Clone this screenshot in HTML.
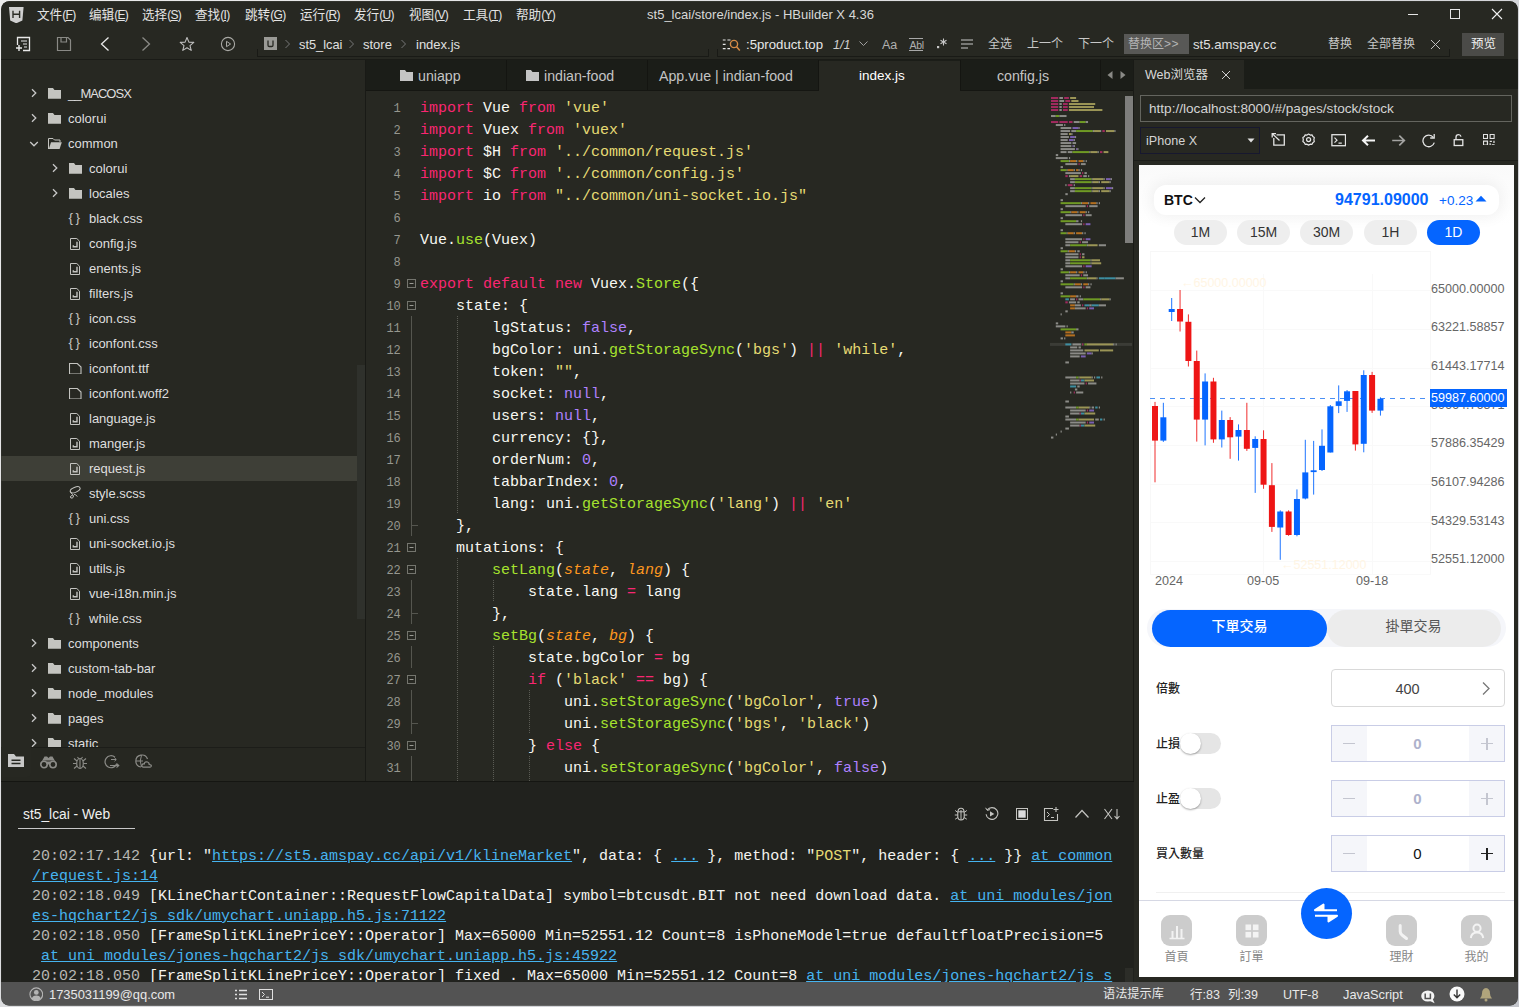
<!DOCTYPE html>
<html><head><meta charset="utf-8"><title>HBuilder X</title><style>
html,body{margin:0;padding:0}
body{width:1519px;height:1007px;overflow:hidden;background:linear-gradient(135deg,#ececec,#c4c6cc);position:relative;font-family:'Liberation Sans',sans-serif}
#w{position:absolute;left:0;top:0;width:1519px;height:1007px;background:#272822;clip-path:inset(1.2px 1.2px 1.5px 1.2px round 8px)}
.b{position:absolute;display:block}
.t{position:absolute;white-space:nowrap}
</style></head><body><div id="w">
<div class="b" style="left:0px;top:0px;width:1519px;height:29px;background:#272822;"></div>
<svg class="b" style="left:9.3px;top:7px;" width="14.6" height="16.4" viewBox="0 0 14.6 16.4"><path d="M0 0H14.6L13.4 13.6L7.3 16.3L1.2 13.6Z" fill="#d0d0d0"/><path d="M4 3.8V11M10.6 3.8V11M4 7.3H10.6" stroke="#2c2d27" stroke-width="1.4" fill="none"/></svg>
<div class="t" style="top:4.5px;font-size:12.6px;line-height:20px;color:#e4e4e4;font-family:'Liberation Sans','Noto Sans CJK SC',sans-serif;left:37px;">文件<span style="font-size:12px;letter-spacing:-0.7px">(<span style="text-decoration:underline">F</span>)</span></div>
<div class="t" style="top:4.5px;font-size:12.6px;line-height:20px;color:#e4e4e4;font-family:'Liberation Sans','Noto Sans CJK SC',sans-serif;left:89px;">编辑<span style="font-size:12px;letter-spacing:-0.7px">(<span style="text-decoration:underline">E</span>)</span></div>
<div class="t" style="top:4.5px;font-size:12.6px;line-height:20px;color:#e4e4e4;font-family:'Liberation Sans','Noto Sans CJK SC',sans-serif;left:142px;">选择<span style="font-size:12px;letter-spacing:-0.7px">(<span style="text-decoration:underline">S</span>)</span></div>
<div class="t" style="top:4.5px;font-size:12.6px;line-height:20px;color:#e4e4e4;font-family:'Liberation Sans','Noto Sans CJK SC',sans-serif;left:195px;">查找<span style="font-size:12px;letter-spacing:-0.7px">(<span style="text-decoration:underline">I</span>)</span></div>
<div class="t" style="top:4.5px;font-size:12.6px;line-height:20px;color:#e4e4e4;font-family:'Liberation Sans','Noto Sans CJK SC',sans-serif;left:245px;">跳转<span style="font-size:12px;letter-spacing:-0.7px">(<span style="text-decoration:underline">G</span>)</span></div>
<div class="t" style="top:4.5px;font-size:12.6px;line-height:20px;color:#e4e4e4;font-family:'Liberation Sans','Noto Sans CJK SC',sans-serif;left:300px;">运行<span style="font-size:12px;letter-spacing:-0.7px">(<span style="text-decoration:underline">R</span>)</span></div>
<div class="t" style="top:4.5px;font-size:12.6px;line-height:20px;color:#e4e4e4;font-family:'Liberation Sans','Noto Sans CJK SC',sans-serif;left:354px;">发行<span style="font-size:12px;letter-spacing:-0.7px">(<span style="text-decoration:underline">U</span>)</span></div>
<div class="t" style="top:4.5px;font-size:12.6px;line-height:20px;color:#e4e4e4;font-family:'Liberation Sans','Noto Sans CJK SC',sans-serif;left:409px;">视图<span style="font-size:12px;letter-spacing:-0.7px">(<span style="text-decoration:underline">V</span>)</span></div>
<div class="t" style="top:4.5px;font-size:12.6px;line-height:20px;color:#e4e4e4;font-family:'Liberation Sans','Noto Sans CJK SC',sans-serif;left:463px;">工具<span style="font-size:12px;letter-spacing:-0.7px">(<span style="text-decoration:underline">T</span>)</span></div>
<div class="t" style="top:4.5px;font-size:12.6px;line-height:20px;color:#e4e4e4;font-family:'Liberation Sans','Noto Sans CJK SC',sans-serif;left:516px;">帮助<span style="font-size:12px;letter-spacing:-0.7px">(<span style="text-decoration:underline">Y</span>)</span></div>
<div class="t" style="top:5.0px;font-size:13px;line-height:20px;color:#d8d8d8;font-family:'Liberation Sans',sans-serif;left:560.5px;width:400px;text-align:center;">st5_lcai/store/index.js - HBuilder X 4.36</div>
<svg class="b" style="left:1406px;top:8px;" width="14" height="12" viewBox="0 0 14 12"><path d="M2 6.5H12" stroke="#e6e6e6" stroke-width="1"/></svg>
<svg class="b" style="left:1449px;top:8px;" width="12" height="12" viewBox="0 0 12 12"><rect x="1.5" y="1.5" width="9" height="9" fill="none" stroke="#e6e6e6" stroke-width="1"/></svg>
<svg class="b" style="left:1491px;top:8px;" width="12" height="12" viewBox="0 0 12 12"><path d="M1 1L11 11M11 1L1 11" stroke="#f0f0f0" stroke-width="1.1"/></svg>
<div class="b" style="left:0px;top:29px;width:1519px;height:31px;background:#272822;"></div>
<div class="b" style="left:0px;top:59px;width:1519px;height:1px;background:#1a1b17;"></div>
<svg class="b" style="left:15px;top:36px;" width="16" height="16" viewBox="0 0 16 16"><path d="M2.5 9V1.5H14.5V14.5H8" fill="none" stroke="#e8e8e8" stroke-width="1.3"/><path d="M6 5H12M8 8H12M9 11H12" stroke="#e8e8e8" stroke-width="1.2"/><path d="M1 12H7M4 9V15" stroke="#e8e8e8" stroke-width="1.4"/></svg>
<svg class="b" style="left:56px;top:36px;" width="16" height="16" viewBox="0 0 16 16"><path d="M1.5 1.5H12L14.5 4V14.5H1.5Z M5 1.5V6H10.5V1.5" fill="none" stroke="#8a8a86" stroke-width="1.2"/></svg>
<svg class="b" style="left:99px;top:36px;" width="12" height="16" viewBox="0 0 12 16"><path d="M9.5 1.5L2.5 8L9.5 14.5" fill="none" stroke="#e8e8e8" stroke-width="1.3"/></svg>
<svg class="b" style="left:140px;top:36px;" width="12" height="16" viewBox="0 0 12 16"><path d="M2.5 1.5L9.5 8L2.5 14.5" fill="none" stroke="#8a8a86" stroke-width="1.3"/></svg>
<svg class="b" style="left:179px;top:36px;" width="16" height="16" viewBox="0 0 16 16"><path d="M8 1.5L9.9 6.1L14.8 6.4L11 9.6L12.2 14.4L8 11.8L3.8 14.4L5 9.6L1.2 6.4L6.1 6.1Z" fill="none" stroke="#bdbdbd" stroke-width="1.1" stroke-linejoin="round"/></svg>
<svg class="b" style="left:220px;top:36px;" width="16" height="16" viewBox="0 0 16 16"><circle cx="8" cy="8" r="6.6" fill="none" stroke="#a8a8a4" stroke-width="1.1"/><path d="M6.5 5.3L10.6 8L6.5 10.7Z" fill="none" stroke="#a8a8a4" stroke-width="1"/></svg>
<div class="b" style="left:257px;top:56px;width:452px;height:1px;background:#191a16;"></div><div class="b" style="left:257px;top:49px;width:1px;height:7px;background:#191a16;"></div><div class="b" style="left:708px;top:49px;width:1px;height:7px;background:#191a16;"></div>
<div class="b" style="left:717px;top:56px;width:733px;height:1px;background:#191a16;"></div><div class="b" style="left:717px;top:49px;width:1px;height:7px;background:#191a16;"></div><div class="b" style="left:1449px;top:49px;width:1px;height:7px;background:#191a16;"></div>
<svg class="b" style="left:264px;top:37px;" width="13" height="13" viewBox="0 0 13 13"><rect x="0" y="0" width="13" height="13" fill="#9a9a96"/><path d="M4 3.5V8.2Q4 9.5 5.3 9.5H7.7Q9 9.5 9 8.2V3.5" fill="none" stroke="#272822" stroke-width="1.3"/></svg>
<svg class="b" style="left:284px;top:39px;" width="7" height="10" viewBox="0 0 7 10"><path d="M1.5 1L5.5 5L1.5 9" fill="none" stroke="#777" stroke-width="1"/></svg>
<div class="t" style="top:34.8px;font-size:12.8px;line-height:20px;color:#e0e0e0;font-family:'Liberation Sans',sans-serif;left:299px;">st5_lcai</div>
<svg class="b" style="left:348px;top:39px;" width="7" height="10" viewBox="0 0 7 10"><path d="M1.5 1L5.5 5L1.5 9" fill="none" stroke="#777" stroke-width="1"/></svg>
<div class="t" style="top:34.8px;font-size:13px;line-height:20px;color:#e0e0e0;font-family:'Liberation Sans',sans-serif;left:363px;">store</div>
<svg class="b" style="left:400px;top:39px;" width="7" height="10" viewBox="0 0 7 10"><path d="M1.5 1L5.5 5L1.5 9" fill="none" stroke="#777" stroke-width="1"/></svg>
<div class="t" style="top:34.8px;font-size:13px;line-height:20px;color:#e0e0e0;font-family:'Liberation Sans',sans-serif;left:416px;">index.js</div>
<svg class="b" style="left:722px;top:37px;" width="19" height="15" viewBox="0 0 19 15"><path d="M0.8 3H3.6M0.8 7.3H3.6M0.8 11.6H3.6M5.4 3H8.5M5.4 11.6H8" stroke="#e8e8e8" stroke-width="1.2"/><circle cx="12" cy="7" r="3.6" fill="none" stroke="#d48a46" stroke-width="1.4"/><path d="M14.6 9.8L17.8 13.6" stroke="#d48a46" stroke-width="1.5"/></svg>
<div class="t" style="top:34.8px;font-size:13.2px;line-height:20px;color:#e6e6e6;font-family:'Liberation Sans',sans-serif;left:746px;">:5product.top</div>
<div class="t" style="top:34.8px;font-size:12.5px;line-height:20px;color:#d0d0d0;font-family:'Liberation Sans',sans-serif;left:833px;font-style:italic;">1/1</div>
<svg class="b" style="left:858px;top:40px;" width="11" height="8" viewBox="0 0 11 8"><path d="M1.5 1.5L5.5 5.5L9.5 1.5" fill="none" stroke="#a0a0a0" stroke-width="1"/></svg>
<div class="t" style="top:34.5px;font-size:12.5px;line-height:20px;color:#b0b0b0;font-family:'Liberation Sans',sans-serif;left:882px;">Aa</div>
<div class="b" style="left:909px;top:38px;width:14px;height:1px;background:#a8a8a8;"></div>
<div class="b" style="left:909px;top:50px;width:14px;height:1px;background:#a8a8a8;"></div>
<div class="t" style="top:34.6px;font-size:10.5px;line-height:20px;color:#b0b0b0;font-family:'Liberation Sans',sans-serif;left:909.5px;letter-spacing:-0.3px;">Abl</div>
<svg class="b" style="left:936px;top:37px;" width="12" height="14" viewBox="0 0 12 14"><rect x="1" y="9" width="2.2" height="2.2" fill="#c8c8c8"/><path d="M7.5 1.5V8.5M4.5 3.2L10.5 6.8M10.5 3.2L4.5 6.8" stroke="#c8c8c8" stroke-width="1.1"/></svg>
<svg class="b" style="left:960px;top:38px;" width="14" height="12" viewBox="0 0 14 12"><path d="M1 2H13M1 6H13M1 10H8" stroke="#c8c8c8" stroke-width="1.2"/></svg>
<div class="t" style="top:33.5px;font-size:12px;line-height:20px;color:#c8c8c8;font-family:'Liberation Sans','Noto Sans CJK SC',sans-serif;left:988px;">全选</div>
<div class="t" style="top:33.5px;font-size:12px;line-height:20px;color:#c8c8c8;font-family:'Liberation Sans','Noto Sans CJK SC',sans-serif;left:1027px;">上一个</div>
<div class="t" style="top:33.5px;font-size:12px;line-height:20px;color:#c8c8c8;font-family:'Liberation Sans','Noto Sans CJK SC',sans-serif;left:1078px;">下一个</div>
<div class="b" style="left:1124px;top:34px;width:65px;height:20px;background:#585856;"></div>
<div class="t" style="top:33.5px;font-size:12px;line-height:20px;color:#b4b4b4;font-family:'Liberation Sans','Noto Sans CJK SC',sans-serif;left:1128px;letter-spacing:0.5px;"><span style="letter-spacing:0">替换区</span>&gt;&gt;</div>
<div class="t" style="top:34.8px;font-size:13.2px;line-height:20px;color:#e0e0e0;font-family:'Liberation Sans',sans-serif;left:1193px;">st5.amspay.cc</div>
<div class="t" style="top:33.5px;font-size:12px;line-height:20px;color:#c8c8c8;font-family:'Liberation Sans','Noto Sans CJK SC',sans-serif;left:1328px;">替换</div>
<div class="t" style="top:33.5px;font-size:12px;line-height:20px;color:#c8c8c8;font-family:'Liberation Sans','Noto Sans CJK SC',sans-serif;left:1367px;">全部替换</div>
<svg class="b" style="left:1430px;top:39px;" width="11" height="11" viewBox="0 0 11 11"><path d="M1 1L10 10M10 1L1 10" stroke="#c0c0c0" stroke-width="1"/></svg>
<div class="b" style="left:1462px;top:33px;width:42px;height:23px;background:#4b4b48;"></div>
<div class="t" style="top:33.5px;font-size:12.5px;line-height:20px;color:#f0f0f0;font-family:'Liberation Sans','Noto Sans CJK SC',sans-serif;left:1471px;">预览</div>
<div class="b" style="left:0px;top:60px;width:365px;height:721px;background:#272822;"></div>
<div class="b" style="left:365px;top:60px;width:1px;height:721px;background:#191a16;"></div>
<div class="b" style="left:357px;top:365px;width:8px;height:254px;background:#2f312c;"></div>
<div class="b" style="left:1px;top:456px;width:356px;height:25px;background:#3e3f37;"></div>
<div class="b" style="left:0;top:60px;width:357px;height:687px;overflow:hidden"><div class="b" style="left:0;top:-60px;width:357px;height:800px"><svg class="b" style="left:31.4px;top:88.1px;" width="7" height="10" viewBox="0 0 7 10"><path d="M1 1.2L4.8 5L1 8.8" fill="none" stroke="#c8c8c8" stroke-width="1.3"/></svg><svg class="b" style="left:48px;top:88.3px;" width="13.2" height="10.8" viewBox="0 0 13.2 10.8"><path d="M0 0H5L6.5 2H13.2V10.8H0Z" fill="#c4c4c0"/></svg><div class="t" style="top:83.8px;font-size:13px;line-height:20px;color:#dedede;font-family:'Liberation Sans',sans-serif;left:68px;letter-spacing:-1px;">__MACOSX</div><svg class="b" style="left:31.4px;top:113.1px;" width="7" height="10" viewBox="0 0 7 10"><path d="M1 1.2L4.8 5L1 8.8" fill="none" stroke="#c8c8c8" stroke-width="1.3"/></svg><svg class="b" style="left:48px;top:113.3px;" width="13.2" height="10.8" viewBox="0 0 13.2 10.8"><path d="M0 0H5L6.5 2H13.2V10.8H0Z" fill="#c4c4c0"/></svg><div class="t" style="top:108.8px;font-size:13px;line-height:20px;color:#dedede;font-family:'Liberation Sans',sans-serif;left:68px;">colorui</div><svg class="b" style="left:29.4px;top:141.1px;" width="10" height="7" viewBox="0 0 10 7"><path d="M1.2 1L5 4.8L8.8 1" fill="none" stroke="#c8c8c8" stroke-width="1.3"/></svg><svg class="b" style="left:47.5px;top:138.0px;" width="14" height="12" viewBox="0 0 14 12"><path d="M0.5 11V0.5H5L6.5 2H12V4" fill="none" stroke="#c4c4c0" stroke-width="1"/><path d="M0.8 11L3 4.3H13.8L11.6 11Z" fill="#c4c4c0"/></svg><div class="t" style="top:133.8px;font-size:13px;line-height:20px;color:#dedede;font-family:'Liberation Sans',sans-serif;left:68px;">common</div><svg class="b" style="left:52.4px;top:163.1px;" width="7" height="10" viewBox="0 0 7 10"><path d="M1 1.2L4.8 5L1 8.8" fill="none" stroke="#c8c8c8" stroke-width="1.3"/></svg><svg class="b" style="left:69px;top:163.3px;" width="13.2" height="10.8" viewBox="0 0 13.2 10.8"><path d="M0 0H5L6.5 2H13.2V10.8H0Z" fill="#c4c4c0"/></svg><div class="t" style="top:158.8px;font-size:13px;line-height:20px;color:#dedede;font-family:'Liberation Sans',sans-serif;left:89px;">colorui</div><svg class="b" style="left:52.4px;top:188.1px;" width="7" height="10" viewBox="0 0 7 10"><path d="M1 1.2L4.8 5L1 8.8" fill="none" stroke="#c8c8c8" stroke-width="1.3"/></svg><svg class="b" style="left:69px;top:188.3px;" width="13.2" height="10.8" viewBox="0 0 13.2 10.8"><path d="M0 0H5L6.5 2H13.2V10.8H0Z" fill="#c4c4c0"/></svg><div class="t" style="top:183.8px;font-size:13px;line-height:20px;color:#dedede;font-family:'Liberation Sans',sans-serif;left:89px;">locales</div><div class="t" style="top:210.7px;font-size:13.5px;line-height:14px;color:#c4c4c0;font-family:'Liberation Sans',sans-serif;left:68.5px;letter-spacing:2.6px;">{}</div><div class="t" style="top:208.8px;font-size:13px;line-height:20px;color:#dedede;font-family:'Liberation Sans',sans-serif;left:89px;">black.css</div><svg class="b" style="left:70px;top:237.5px;" width="10" height="12" viewBox="0 0 10 12"><path d="M0.5 0.5H6.8L9.5 3.2V11.5H0.5Z" fill="none" stroke="#c4c4c0" stroke-width="1"/><path d="M7 3.8V8.7H3.3V7.2" fill="none" stroke="#c4c4c0" stroke-width="1.4"/></svg><div class="t" style="top:233.8px;font-size:13px;line-height:20px;color:#dedede;font-family:'Liberation Sans',sans-serif;left:89px;">config.js</div><svg class="b" style="left:70px;top:262.5px;" width="10" height="12" viewBox="0 0 10 12"><path d="M0.5 0.5H6.8L9.5 3.2V11.5H0.5Z" fill="none" stroke="#c4c4c0" stroke-width="1"/><path d="M7 3.8V8.7H3.3V7.2" fill="none" stroke="#c4c4c0" stroke-width="1.4"/></svg><div class="t" style="top:258.8px;font-size:13px;line-height:20px;color:#dedede;font-family:'Liberation Sans',sans-serif;left:89px;">enents.js</div><svg class="b" style="left:70px;top:287.5px;" width="10" height="12" viewBox="0 0 10 12"><path d="M0.5 0.5H6.8L9.5 3.2V11.5H0.5Z" fill="none" stroke="#c4c4c0" stroke-width="1"/><path d="M7 3.8V8.7H3.3V7.2" fill="none" stroke="#c4c4c0" stroke-width="1.4"/></svg><div class="t" style="top:283.8px;font-size:13px;line-height:20px;color:#dedede;font-family:'Liberation Sans',sans-serif;left:89px;">filters.js</div><div class="t" style="top:310.7px;font-size:13.5px;line-height:14px;color:#c4c4c0;font-family:'Liberation Sans',sans-serif;left:68.5px;letter-spacing:2.6px;">{}</div><div class="t" style="top:308.8px;font-size:13px;line-height:20px;color:#dedede;font-family:'Liberation Sans',sans-serif;left:89px;">icon.css</div><div class="t" style="top:335.7px;font-size:13.5px;line-height:14px;color:#c4c4c0;font-family:'Liberation Sans',sans-serif;left:68.5px;letter-spacing:2.6px;">{}</div><div class="t" style="top:333.8px;font-size:13px;line-height:20px;color:#dedede;font-family:'Liberation Sans',sans-serif;left:89px;">iconfont.css</div><svg class="b" style="left:69px;top:362.8px;" width="12.5" height="11.5" viewBox="0 0 12.5 11.5"><path d="M0.5 0.5H8.3L12 4V11H0.5Z" fill="none" stroke="#c4c4c0" stroke-width="1.1"/></svg><div class="t" style="top:358.8px;font-size:13px;line-height:20px;color:#dedede;font-family:'Liberation Sans',sans-serif;left:89px;">iconfont.ttf</div><svg class="b" style="left:69px;top:387.8px;" width="12.5" height="11.5" viewBox="0 0 12.5 11.5"><path d="M0.5 0.5H8.3L12 4V11H0.5Z" fill="none" stroke="#c4c4c0" stroke-width="1.1"/></svg><div class="t" style="top:383.8px;font-size:13px;line-height:20px;color:#dedede;font-family:'Liberation Sans',sans-serif;left:89px;">iconfont.woff2</div><svg class="b" style="left:70px;top:412.5px;" width="10" height="12" viewBox="0 0 10 12"><path d="M0.5 0.5H6.8L9.5 3.2V11.5H0.5Z" fill="none" stroke="#c4c4c0" stroke-width="1"/><path d="M7 3.8V8.7H3.3V7.2" fill="none" stroke="#c4c4c0" stroke-width="1.4"/></svg><div class="t" style="top:408.8px;font-size:13px;line-height:20px;color:#dedede;font-family:'Liberation Sans',sans-serif;left:89px;">language.js</div><svg class="b" style="left:70px;top:437.5px;" width="10" height="12" viewBox="0 0 10 12"><path d="M0.5 0.5H6.8L9.5 3.2V11.5H0.5Z" fill="none" stroke="#c4c4c0" stroke-width="1"/><path d="M7 3.8V8.7H3.3V7.2" fill="none" stroke="#c4c4c0" stroke-width="1.4"/></svg><div class="t" style="top:433.8px;font-size:13px;line-height:20px;color:#dedede;font-family:'Liberation Sans',sans-serif;left:89px;">manger.js</div><svg class="b" style="left:70px;top:462.5px;" width="10" height="12" viewBox="0 0 10 12"><path d="M0.5 0.5H6.8L9.5 3.2V11.5H0.5Z" fill="none" stroke="#c4c4c0" stroke-width="1"/><path d="M7 3.8V8.7H3.3V7.2" fill="none" stroke="#c4c4c0" stroke-width="1.4"/></svg><div class="t" style="top:458.8px;font-size:13px;line-height:20px;color:#dedede;font-family:'Liberation Sans',sans-serif;left:89px;">request.js</div><svg class="b" style="left:69px;top:485.0px;" width="13" height="15" viewBox="0 0 13 15"><ellipse cx="6.2" cy="4.8" rx="5.2" ry="2.5" transform="rotate(-22 6.2 4.8)" fill="none" stroke="#c4c4c0" stroke-width="1"/><path d="M1.3 6.3Q2 8.2 3.6 9.6Q5 11 4.2 12.3Q3.2 13.6 1.8 12.9Q0.8 12 2 10.9Q2.8 10.3 3.6 10.4" fill="none" stroke="#c4c4c0" stroke-width="1"/><path d="M5 9.3Q7 9.3 8.3 11.6" fill="none" stroke="#c4c4c0" stroke-width="0.9"/></svg><div class="t" style="top:483.8px;font-size:13px;line-height:20px;color:#dedede;font-family:'Liberation Sans',sans-serif;left:89px;">style.scss</div><div class="t" style="top:510.7px;font-size:13.5px;line-height:14px;color:#c4c4c0;font-family:'Liberation Sans',sans-serif;left:68.5px;letter-spacing:2.6px;">{}</div><div class="t" style="top:508.8px;font-size:13px;line-height:20px;color:#dedede;font-family:'Liberation Sans',sans-serif;left:89px;">uni.css</div><svg class="b" style="left:70px;top:537.5px;" width="10" height="12" viewBox="0 0 10 12"><path d="M0.5 0.5H6.8L9.5 3.2V11.5H0.5Z" fill="none" stroke="#c4c4c0" stroke-width="1"/><path d="M7 3.8V8.7H3.3V7.2" fill="none" stroke="#c4c4c0" stroke-width="1.4"/></svg><div class="t" style="top:533.8px;font-size:13px;line-height:20px;color:#dedede;font-family:'Liberation Sans',sans-serif;left:89px;">uni-socket.io.js</div><svg class="b" style="left:70px;top:562.5px;" width="10" height="12" viewBox="0 0 10 12"><path d="M0.5 0.5H6.8L9.5 3.2V11.5H0.5Z" fill="none" stroke="#c4c4c0" stroke-width="1"/><path d="M7 3.8V8.7H3.3V7.2" fill="none" stroke="#c4c4c0" stroke-width="1.4"/></svg><div class="t" style="top:558.8px;font-size:13px;line-height:20px;color:#dedede;font-family:'Liberation Sans',sans-serif;left:89px;">utils.js</div><svg class="b" style="left:70px;top:587.5px;" width="10" height="12" viewBox="0 0 10 12"><path d="M0.5 0.5H6.8L9.5 3.2V11.5H0.5Z" fill="none" stroke="#c4c4c0" stroke-width="1"/><path d="M7 3.8V8.7H3.3V7.2" fill="none" stroke="#c4c4c0" stroke-width="1.4"/></svg><div class="t" style="top:583.8px;font-size:13px;line-height:20px;color:#dedede;font-family:'Liberation Sans',sans-serif;left:89px;">vue-i18n.min.js</div><div class="t" style="top:610.7px;font-size:13.5px;line-height:14px;color:#c4c4c0;font-family:'Liberation Sans',sans-serif;left:68.5px;letter-spacing:2.6px;">{}</div><div class="t" style="top:608.8px;font-size:13px;line-height:20px;color:#dedede;font-family:'Liberation Sans',sans-serif;left:89px;">while.css</div><svg class="b" style="left:31.4px;top:638.1px;" width="7" height="10" viewBox="0 0 7 10"><path d="M1 1.2L4.8 5L1 8.8" fill="none" stroke="#c8c8c8" stroke-width="1.3"/></svg><svg class="b" style="left:48px;top:638.3px;" width="13.2" height="10.8" viewBox="0 0 13.2 10.8"><path d="M0 0H5L6.5 2H13.2V10.8H0Z" fill="#c4c4c0"/></svg><div class="t" style="top:633.8px;font-size:13px;line-height:20px;color:#dedede;font-family:'Liberation Sans',sans-serif;left:68px;">components</div><svg class="b" style="left:31.4px;top:663.1px;" width="7" height="10" viewBox="0 0 7 10"><path d="M1 1.2L4.8 5L1 8.8" fill="none" stroke="#c8c8c8" stroke-width="1.3"/></svg><svg class="b" style="left:48px;top:663.3px;" width="13.2" height="10.8" viewBox="0 0 13.2 10.8"><path d="M0 0H5L6.5 2H13.2V10.8H0Z" fill="#c4c4c0"/></svg><div class="t" style="top:658.8px;font-size:13px;line-height:20px;color:#dedede;font-family:'Liberation Sans',sans-serif;left:68px;">custom-tab-bar</div><svg class="b" style="left:31.4px;top:688.1px;" width="7" height="10" viewBox="0 0 7 10"><path d="M1 1.2L4.8 5L1 8.8" fill="none" stroke="#c8c8c8" stroke-width="1.3"/></svg><svg class="b" style="left:48px;top:688.3px;" width="13.2" height="10.8" viewBox="0 0 13.2 10.8"><path d="M0 0H5L6.5 2H13.2V10.8H0Z" fill="#c4c4c0"/></svg><div class="t" style="top:683.8px;font-size:13px;line-height:20px;color:#dedede;font-family:'Liberation Sans',sans-serif;left:68px;">node_modules</div><svg class="b" style="left:31.4px;top:713.1px;" width="7" height="10" viewBox="0 0 7 10"><path d="M1 1.2L4.8 5L1 8.8" fill="none" stroke="#c8c8c8" stroke-width="1.3"/></svg><svg class="b" style="left:48px;top:713.3px;" width="13.2" height="10.8" viewBox="0 0 13.2 10.8"><path d="M0 0H5L6.5 2H13.2V10.8H0Z" fill="#c4c4c0"/></svg><div class="t" style="top:708.8px;font-size:13px;line-height:20px;color:#dedede;font-family:'Liberation Sans',sans-serif;left:68px;">pages</div><svg class="b" style="left:31.4px;top:738.1px;" width="7" height="10" viewBox="0 0 7 10"><path d="M1 1.2L4.8 5L1 8.8" fill="none" stroke="#c8c8c8" stroke-width="1.3"/></svg><svg class="b" style="left:48px;top:738.3px;" width="13.2" height="10.8" viewBox="0 0 13.2 10.8"><path d="M0 0H5L6.5 2H13.2V10.8H0Z" fill="#c4c4c0"/></svg><div class="t" style="top:733.8px;font-size:13px;line-height:20px;color:#dedede;font-family:'Liberation Sans',sans-serif;left:68px;">static</div></div></div>
<div class="b" style="left:0px;top:747px;width:365px;height:35px;background:#262721;"></div>
<div class="b" style="left:0px;top:747px;width:365px;height:1px;background:#1c1d19;"></div>
<div class="b" style="left:1px;top:747px;width:30px;height:30px;background:#272822;border-radius:0 0 4px 0;"></div>
<svg class="b" style="left:8px;top:754px;" width="16" height="13" viewBox="0 0 16 13"><path d="M0 0H6L8 2.6H16V13H0Z" fill="#c8c8c8"/><path d="M3.5 6.3H12.5M3.5 9.5H12.5" stroke="#272822" stroke-width="1.5"/></svg>
<svg class="b" style="left:40px;top:755px;" width="17" height="14" viewBox="0 0 17 14"><circle cx="4" cy="9.5" r="3.2" fill="none" stroke="#8c8c88" stroke-width="1.6"/><circle cx="13" cy="9.5" r="3.2" fill="none" stroke="#8c8c88" stroke-width="1.6"/><path d="M2 6L4.5 1.5H7L8.5 3L10 1.5H12.5L15 6L13 5.5H4Z" fill="#8c8c88"/><rect x="7" y="6.5" width="3" height="3" fill="#8c8c88"/></svg>
<svg class="b" style="left:72px;top:755px;" width="16" height="15" viewBox="0 0 16 15"><ellipse cx="8" cy="8.5" rx="3.3" ry="5" fill="none" stroke="#8c8c88" stroke-width="1.2"/><path d="M8 3.5V13.5M5.5 2L6.8 3.8M10.5 2L9.2 3.8M1 8.5H4.5M11.5 8.5H15M2 3.5L5 6M14 3.5L11 6M2 13.5L5 11M14 13.5L11 11" stroke="#8c8c88" stroke-width="1.1" fill="none"/></svg>
<svg class="b" style="left:103px;top:754px;" width="17" height="16" viewBox="0 0 17 16"><path d="M12 3.2A6 6 0 1 0 13.6 10" fill="none" stroke="#8c8c88" stroke-width="1.2"/><path d="M8 5.5H13M11.5 3.8L13.3 5.5L11.5 7.2" fill="none" stroke="#8c8c88" stroke-width="1"/><path d="M7 11.5H15.5M13.5 9.5L15.8 11.5L13.5 13.5" fill="none" stroke="#8c8c88" stroke-width="1.1"/></svg>
<svg class="b" style="left:135px;top:754px;" width="18" height="16" viewBox="0 0 18 16"><path d="M12.5 5A6 6 0 1 0 6 13" fill="none" stroke="#8c8c88" stroke-width="1.2"/><path d="M1 7H8M6.5 1.2Q4 7 6.5 12.8" fill="none" stroke="#8c8c88" stroke-width="1"/><path d="M8.5 13.2Q6.5 13 7 11Q7.6 9.6 9.2 10Q10 7.2 12.5 8Q14.3 8.8 14.2 10.5Q16.5 10.8 16.3 12.2Q16 13.3 14.8 13.2Z" fill="none" stroke="#8c8c88" stroke-width="1.2"/></svg>
<div class="b" style="left:366px;top:60px;width:768px;height:31px;background:#1b1d18;"></div>
<div class="b" style="left:366px;top:90px;width:768px;height:1px;background:#151612;"></div>
<div class="b" style="left:506px;top:60px;width:1px;height:30px;background:#141511;"></div>
<div class="b" style="left:647px;top:60px;width:1px;height:30px;background:#141511;"></div>
<div class="b" style="left:818px;top:60px;width:1px;height:30px;background:#141511;"></div>
<div class="b" style="left:960px;top:60px;width:1px;height:30px;background:#141511;"></div>
<div class="b" style="left:1100px;top:60px;width:1px;height:30px;background:#141511;"></div>
<div class="b" style="left:819px;top:61px;width:141px;height:30px;background:#272822;"></div>
<svg class="b" style="left:400px;top:69.5px;" width="13.4" height="11" viewBox="0 0 13.4 11"><path d="M0 0H5L6.5 2H13.4V11H0Z" fill="#c4c4c4"/></svg>
<div class="t" style="top:65.5px;font-size:14.2px;line-height:20px;color:#c4c4c4;font-family:'Liberation Sans',sans-serif;left:418px;">uniapp</div>
<svg class="b" style="left:526px;top:69.5px;" width="13.4" height="11" viewBox="0 0 13.4 11"><path d="M0 0H5L6.5 2H13.4V11H0Z" fill="#c4c4c4"/></svg>
<div class="t" style="top:65.5px;font-size:14.2px;line-height:20px;color:#c4c4c4;font-family:'Liberation Sans',sans-serif;left:544px;">indian-food</div>
<div class="t" style="top:65.5px;font-size:14.2px;line-height:20px;color:#c4c4c4;font-family:'Liberation Sans',sans-serif;left:659px;">App.vue | indian-food</div>
<div class="t" style="top:65.5px;font-size:13.5px;line-height:20px;color:#ffffff;font-family:'Liberation Sans',sans-serif;left:859px;">index.js</div>
<div class="t" style="top:65.5px;font-size:14.2px;line-height:20px;color:#c4c4c4;font-family:'Liberation Sans',sans-serif;left:997px;">config.js</div>
<svg class="b" style="left:1106px;top:70px;" width="8" height="10" viewBox="0 0 8 10"><path d="M6.5 1L1.5 5L6.5 9Z" fill="#8a8a86"/></svg>
<svg class="b" style="left:1119px;top:70px;" width="8" height="10" viewBox="0 0 8 10"><path d="M1.5 1L6.5 5L1.5 9Z" fill="#8a8a86"/></svg>
<div class="b" style="left:366px;top:91px;width:768px;height:690px;background:#272822;"></div>
<div class="b" style="left:0;top:91px;width:1134px;height:690px;overflow:hidden"><div class="b" style="left:0;top:-91px;width:1134px;height:800px"><div class="t" style="right:733.8px;top:97.5px;font:12px/22px 'Liberation Mono',monospace;letter-spacing:-0.4px;color:#96978f">1</div><div class="t" style="left:420px;top:98px;font:15px/22px 'Liberation Mono',monospace;color:#f8f8f2;white-space:pre"><span style="color:#f92672">import</span> Vue <span style="color:#f92672">from</span> <span style="color:#e6db74">&#x27;vue&#x27;</span></div><div class="t" style="right:733.8px;top:119.5px;font:12px/22px 'Liberation Mono',monospace;letter-spacing:-0.4px;color:#96978f">2</div><div class="t" style="left:420px;top:120px;font:15px/22px 'Liberation Mono',monospace;color:#f8f8f2;white-space:pre"><span style="color:#f92672">import</span> Vuex <span style="color:#f92672">from</span> <span style="color:#e6db74">&#x27;vuex&#x27;</span></div><div class="t" style="right:733.8px;top:141.5px;font:12px/22px 'Liberation Mono',monospace;letter-spacing:-0.4px;color:#96978f">3</div><div class="t" style="left:420px;top:142px;font:15px/22px 'Liberation Mono',monospace;color:#f8f8f2;white-space:pre"><span style="color:#f92672">import</span> $H <span style="color:#f92672">from</span> <span style="color:#e6db74">&#x27;../common/request.js&#x27;</span></div><div class="t" style="right:733.8px;top:163.5px;font:12px/22px 'Liberation Mono',monospace;letter-spacing:-0.4px;color:#96978f">4</div><div class="t" style="left:420px;top:164px;font:15px/22px 'Liberation Mono',monospace;color:#f8f8f2;white-space:pre"><span style="color:#f92672">import</span> $C <span style="color:#f92672">from</span> <span style="color:#e6db74">&#x27;../common/config.js&#x27;</span></div><div class="t" style="right:733.8px;top:185.5px;font:12px/22px 'Liberation Mono',monospace;letter-spacing:-0.4px;color:#96978f">5</div><div class="t" style="left:420px;top:186px;font:15px/22px 'Liberation Mono',monospace;color:#f8f8f2;white-space:pre"><span style="color:#f92672">import</span> io <span style="color:#f92672">from</span> <span style="color:#e6db74">&quot;../common/uni-socket.io.js&quot;</span></div><div class="t" style="right:733.8px;top:207.5px;font:12px/22px 'Liberation Mono',monospace;letter-spacing:-0.4px;color:#96978f">6</div><div class="t" style="right:733.8px;top:229.5px;font:12px/22px 'Liberation Mono',monospace;letter-spacing:-0.4px;color:#96978f">7</div><div class="t" style="left:420px;top:230px;font:15px/22px 'Liberation Mono',monospace;color:#f8f8f2;white-space:pre">Vue.<span style="color:#a6e22e">use</span>(Vuex)</div><div class="t" style="right:733.8px;top:251.5px;font:12px/22px 'Liberation Mono',monospace;letter-spacing:-0.4px;color:#96978f">8</div><div class="t" style="right:733.8px;top:273.5px;font:12px/22px 'Liberation Mono',monospace;letter-spacing:-0.4px;color:#96978f">9</div><div class="t" style="left:420px;top:274px;font:15px/22px 'Liberation Mono',monospace;color:#f8f8f2;white-space:pre"><span style="color:#f92672">export</span> <span style="color:#f92672">default</span> <span style="color:#f92672">new</span> Vuex.<span style="color:#a6e22e">Store</span>({</div><div class="t" style="right:733.8px;top:295.5px;font:12px/22px 'Liberation Mono',monospace;letter-spacing:-0.4px;color:#96978f">10</div><div class="t" style="left:420px;top:296px;font:15px/22px 'Liberation Mono',monospace;color:#f8f8f2;white-space:pre">    state: {</div><div class="t" style="right:733.8px;top:317.5px;font:12px/22px 'Liberation Mono',monospace;letter-spacing:-0.4px;color:#96978f">11</div><div class="t" style="left:420px;top:318px;font:15px/22px 'Liberation Mono',monospace;color:#f8f8f2;white-space:pre">        lgStatus: <span style="color:#ae81ff">false</span>,</div><div class="t" style="right:733.8px;top:339.5px;font:12px/22px 'Liberation Mono',monospace;letter-spacing:-0.4px;color:#96978f">12</div><div class="t" style="left:420px;top:340px;font:15px/22px 'Liberation Mono',monospace;color:#f8f8f2;white-space:pre">        bgColor: uni.<span style="color:#a6e22e">getStorageSync</span>(<span style="color:#e6db74">&#x27;bgs&#x27;</span>) <span style="color:#f92672">||</span> <span style="color:#e6db74">&#x27;while&#x27;</span>,</div><div class="t" style="right:733.8px;top:361.5px;font:12px/22px 'Liberation Mono',monospace;letter-spacing:-0.4px;color:#96978f">13</div><div class="t" style="left:420px;top:362px;font:15px/22px 'Liberation Mono',monospace;color:#f8f8f2;white-space:pre">        token: <span style="color:#e6db74">&quot;&quot;</span>,</div><div class="t" style="right:733.8px;top:383.5px;font:12px/22px 'Liberation Mono',monospace;letter-spacing:-0.4px;color:#96978f">14</div><div class="t" style="left:420px;top:384px;font:15px/22px 'Liberation Mono',monospace;color:#f8f8f2;white-space:pre">        socket: <span style="color:#ae81ff">null</span>,</div><div class="t" style="right:733.8px;top:405.5px;font:12px/22px 'Liberation Mono',monospace;letter-spacing:-0.4px;color:#96978f">15</div><div class="t" style="left:420px;top:406px;font:15px/22px 'Liberation Mono',monospace;color:#f8f8f2;white-space:pre">        users: <span style="color:#ae81ff">null</span>,</div><div class="t" style="right:733.8px;top:427.5px;font:12px/22px 'Liberation Mono',monospace;letter-spacing:-0.4px;color:#96978f">16</div><div class="t" style="left:420px;top:428px;font:15px/22px 'Liberation Mono',monospace;color:#f8f8f2;white-space:pre">        currency: {},</div><div class="t" style="right:733.8px;top:449.5px;font:12px/22px 'Liberation Mono',monospace;letter-spacing:-0.4px;color:#96978f">17</div><div class="t" style="left:420px;top:450px;font:15px/22px 'Liberation Mono',monospace;color:#f8f8f2;white-space:pre">        orderNum: <span style="color:#ae81ff">0</span>,</div><div class="t" style="right:733.8px;top:471.5px;font:12px/22px 'Liberation Mono',monospace;letter-spacing:-0.4px;color:#96978f">18</div><div class="t" style="left:420px;top:472px;font:15px/22px 'Liberation Mono',monospace;color:#f8f8f2;white-space:pre">        tabbarIndex: <span style="color:#ae81ff">0</span>,</div><div class="t" style="right:733.8px;top:493.5px;font:12px/22px 'Liberation Mono',monospace;letter-spacing:-0.4px;color:#96978f">19</div><div class="t" style="left:420px;top:494px;font:15px/22px 'Liberation Mono',monospace;color:#f8f8f2;white-space:pre">        lang: uni.<span style="color:#a6e22e">getStorageSync</span>(<span style="color:#e6db74">&#x27;lang&#x27;</span>) <span style="color:#f92672">||</span> <span style="color:#e6db74">&#x27;en&#x27;</span></div><div class="t" style="right:733.8px;top:515.5px;font:12px/22px 'Liberation Mono',monospace;letter-spacing:-0.4px;color:#96978f">20</div><div class="t" style="left:420px;top:516px;font:15px/22px 'Liberation Mono',monospace;color:#f8f8f2;white-space:pre">    },</div><div class="t" style="right:733.8px;top:537.5px;font:12px/22px 'Liberation Mono',monospace;letter-spacing:-0.4px;color:#96978f">21</div><div class="t" style="left:420px;top:538px;font:15px/22px 'Liberation Mono',monospace;color:#f8f8f2;white-space:pre">    mutations: {</div><div class="t" style="right:733.8px;top:559.5px;font:12px/22px 'Liberation Mono',monospace;letter-spacing:-0.4px;color:#96978f">22</div><div class="t" style="left:420px;top:560px;font:15px/22px 'Liberation Mono',monospace;color:#f8f8f2;white-space:pre">        <span style="color:#a6e22e">setLang</span>(<span style="color:#fd971f;font-style:italic">state</span>, <span style="color:#fd971f;font-style:italic">lang</span>) {</div><div class="t" style="right:733.8px;top:581.5px;font:12px/22px 'Liberation Mono',monospace;letter-spacing:-0.4px;color:#96978f">23</div><div class="t" style="left:420px;top:582px;font:15px/22px 'Liberation Mono',monospace;color:#f8f8f2;white-space:pre">            state.lang <span style="color:#f92672">=</span> lang</div><div class="t" style="right:733.8px;top:603.5px;font:12px/22px 'Liberation Mono',monospace;letter-spacing:-0.4px;color:#96978f">24</div><div class="t" style="left:420px;top:604px;font:15px/22px 'Liberation Mono',monospace;color:#f8f8f2;white-space:pre">        },</div><div class="t" style="right:733.8px;top:625.5px;font:12px/22px 'Liberation Mono',monospace;letter-spacing:-0.4px;color:#96978f">25</div><div class="t" style="left:420px;top:626px;font:15px/22px 'Liberation Mono',monospace;color:#f8f8f2;white-space:pre">        <span style="color:#a6e22e">setBg</span>(<span style="color:#fd971f;font-style:italic">state</span>, <span style="color:#fd971f;font-style:italic">bg</span>) {</div><div class="t" style="right:733.8px;top:647.5px;font:12px/22px 'Liberation Mono',monospace;letter-spacing:-0.4px;color:#96978f">26</div><div class="t" style="left:420px;top:648px;font:15px/22px 'Liberation Mono',monospace;color:#f8f8f2;white-space:pre">            state.bgColor <span style="color:#f92672">=</span> bg</div><div class="t" style="right:733.8px;top:669.5px;font:12px/22px 'Liberation Mono',monospace;letter-spacing:-0.4px;color:#96978f">27</div><div class="t" style="left:420px;top:670px;font:15px/22px 'Liberation Mono',monospace;color:#f8f8f2;white-space:pre">            <span style="color:#f92672">if</span> (<span style="color:#e6db74">&#x27;black&#x27;</span> <span style="color:#f92672">==</span> bg) {</div><div class="t" style="right:733.8px;top:691.5px;font:12px/22px 'Liberation Mono',monospace;letter-spacing:-0.4px;color:#96978f">28</div><div class="t" style="left:420px;top:692px;font:15px/22px 'Liberation Mono',monospace;color:#f8f8f2;white-space:pre">                uni.<span style="color:#a6e22e">setStorageSync</span>(<span style="color:#e6db74">&#x27;bgColor&#x27;</span>, <span style="color:#ae81ff">true</span>)</div><div class="t" style="right:733.8px;top:713.5px;font:12px/22px 'Liberation Mono',monospace;letter-spacing:-0.4px;color:#96978f">29</div><div class="t" style="left:420px;top:714px;font:15px/22px 'Liberation Mono',monospace;color:#f8f8f2;white-space:pre">                uni.<span style="color:#a6e22e">setStorageSync</span>(<span style="color:#e6db74">&#x27;bgs&#x27;</span>, <span style="color:#e6db74">&#x27;black&#x27;</span>)</div><div class="t" style="right:733.8px;top:735.5px;font:12px/22px 'Liberation Mono',monospace;letter-spacing:-0.4px;color:#96978f">30</div><div class="t" style="left:420px;top:736px;font:15px/22px 'Liberation Mono',monospace;color:#f8f8f2;white-space:pre">            } <span style="color:#f92672">else</span> {</div><div class="t" style="right:733.8px;top:757.5px;font:12px/22px 'Liberation Mono',monospace;letter-spacing:-0.4px;color:#96978f">31</div><div class="t" style="left:420px;top:758px;font:15px/22px 'Liberation Mono',monospace;color:#f8f8f2;white-space:pre">                uni.<span style="color:#a6e22e">setStorageSync</span>(<span style="color:#e6db74">&#x27;bgColor&#x27;</span>, <span style="color:#ae81ff">false</span>)</div><svg class="b" style="left:407px;top:279px;" width="9" height="9" viewBox="0 0 9 9"><rect x="0.5" y="0.5" width="8" height="8" fill="none" stroke="#74756e" stroke-width="1"/><path d="M2.5 4.5H6.5" stroke="#9a9a94" stroke-width="1"/></svg><svg class="b" style="left:407px;top:301px;" width="9" height="9" viewBox="0 0 9 9"><rect x="0.5" y="0.5" width="8" height="8" fill="none" stroke="#74756e" stroke-width="1"/><path d="M2.5 4.5H6.5" stroke="#9a9a94" stroke-width="1"/></svg><svg class="b" style="left:407px;top:543px;" width="9" height="9" viewBox="0 0 9 9"><rect x="0.5" y="0.5" width="8" height="8" fill="none" stroke="#74756e" stroke-width="1"/><path d="M2.5 4.5H6.5" stroke="#9a9a94" stroke-width="1"/></svg><svg class="b" style="left:407px;top:565px;" width="9" height="9" viewBox="0 0 9 9"><rect x="0.5" y="0.5" width="8" height="8" fill="none" stroke="#74756e" stroke-width="1"/><path d="M2.5 4.5H6.5" stroke="#9a9a94" stroke-width="1"/></svg><svg class="b" style="left:407px;top:631px;" width="9" height="9" viewBox="0 0 9 9"><rect x="0.5" y="0.5" width="8" height="8" fill="none" stroke="#74756e" stroke-width="1"/><path d="M2.5 4.5H6.5" stroke="#9a9a94" stroke-width="1"/></svg><svg class="b" style="left:407px;top:675px;" width="9" height="9" viewBox="0 0 9 9"><rect x="0.5" y="0.5" width="8" height="8" fill="none" stroke="#74756e" stroke-width="1"/><path d="M2.5 4.5H6.5" stroke="#9a9a94" stroke-width="1"/></svg><svg class="b" style="left:407px;top:741px;" width="9" height="9" viewBox="0 0 9 9"><rect x="0.5" y="0.5" width="8" height="8" fill="none" stroke="#74756e" stroke-width="1"/><path d="M2.5 4.5H6.5" stroke="#9a9a94" stroke-width="1"/></svg><div class="b" style="left:411px;top:316px;width:1px;height:220px;background:#55564f;"></div><div class="b" style="left:411px;top:525px;width:7px;height:1px;background:#55564f;"></div><div class="b" style="left:411px;top:580px;width:1px;height:44px;background:#55564f;"></div><div class="b" style="left:411px;top:613px;width:7px;height:1px;background:#55564f;"></div><div class="b" style="left:411px;top:646px;width:1px;height:22px;background:#55564f;"></div><div class="b" style="left:411px;top:690px;width:1px;height:44px;background:#55564f;"></div><div class="b" style="left:411px;top:723px;width:7px;height:1px;background:#55564f;"></div><div class="b" style="left:411px;top:756px;width:1px;height:26px;background:#55564f;"></div><div class="b" style="left:457px;top:316px;width:1px;height:198px;background:repeating-linear-gradient(to bottom,#5a5b54 0 1px,transparent 1px 2px)"></div><div class="b" style="left:457px;top:558px;width:1px;height:223px;background:repeating-linear-gradient(to bottom,#5a5b54 0 1px,transparent 1px 2px)"></div><div class="b" style="left:493px;top:580px;width:1px;height:22px;background:repeating-linear-gradient(to bottom,#5a5b54 0 1px,transparent 1px 2px)"></div><div class="b" style="left:493px;top:646px;width:1px;height:135px;background:repeating-linear-gradient(to bottom,#5a5b54 0 1px,transparent 1px 2px)"></div><div class="b" style="left:529px;top:690px;width:1px;height:44px;background:repeating-linear-gradient(to bottom,#5a5b54 0 1px,transparent 1px 2px)"></div><div class="b" style="left:529px;top:756px;width:1px;height:25px;background:repeating-linear-gradient(to bottom,#5a5b54 0 1px,transparent 1px 2px)"></div></div></div>
<svg class="b" style="left:1050px;top:97.0px;" width="82" height="345" viewBox="0 0 82 345"><rect x="0" y="245.91" width="82" height="3" fill="#3b3c36"/><rect x="1.00" y="0.00" width="7.17" height="2" fill="#a12a5e"/><rect x="9.37" y="0.00" width="3.58" height="2" fill="#8b8b87"/><rect x="14.15" y="0.00" width="4.78" height="2" fill="#a12a5e"/><rect x="20.12" y="0.00" width="5.98" height="2" fill="#9b9556"/><rect x="1.00" y="3.00" width="7.17" height="2" fill="#a12a5e"/><rect x="9.37" y="3.00" width="4.78" height="2" fill="#8b8b87"/><rect x="15.34" y="3.00" width="4.78" height="2" fill="#a12a5e"/><rect x="21.32" y="3.00" width="7.17" height="2" fill="#9b9556"/><rect x="1.00" y="6.01" width="7.17" height="2" fill="#a12a5e"/><rect x="9.37" y="6.01" width="2.39" height="2" fill="#8b8b87"/><rect x="12.95" y="6.01" width="4.78" height="2" fill="#a12a5e"/><rect x="18.93" y="6.01" width="26.29" height="2" fill="#9b9556"/><rect x="1.00" y="9.02" width="7.17" height="2" fill="#a12a5e"/><rect x="9.37" y="9.02" width="2.39" height="2" fill="#8b8b87"/><rect x="12.95" y="9.02" width="4.78" height="2" fill="#a12a5e"/><rect x="18.93" y="9.02" width="25.10" height="2" fill="#9b9556"/><rect x="1.00" y="12.02" width="7.17" height="2" fill="#a12a5e"/><rect x="9.37" y="12.02" width="2.39" height="2" fill="#8b8b87"/><rect x="12.95" y="12.02" width="4.78" height="2" fill="#a12a5e"/><rect x="18.93" y="12.02" width="33.46" height="2" fill="#9b9556"/><rect x="1.00" y="18.03" width="4.78" height="2" fill="#8b8b87"/><rect x="5.78" y="18.03" width="3.58" height="2" fill="#6f9a24"/><rect x="9.37" y="18.03" width="7.17" height="2" fill="#8b8b87"/><rect x="1.00" y="24.04" width="7.17" height="2" fill="#a12a5e"/><rect x="9.37" y="24.04" width="8.37" height="2" fill="#a12a5e"/><rect x="18.93" y="24.04" width="3.58" height="2" fill="#a12a5e"/><rect x="23.71" y="24.04" width="5.98" height="2" fill="#8b8b87"/><rect x="29.68" y="24.04" width="5.98" height="2" fill="#6f9a24"/><rect x="35.66" y="24.04" width="2.39" height="2" fill="#8b8b87"/><rect x="5.78" y="27.04" width="7.17" height="2" fill="#8b8b87"/><rect x="14.15" y="27.04" width="1.20" height="2" fill="#8b8b87"/><rect x="10.56" y="30.05" width="10.76" height="2" fill="#8b8b87"/><rect x="22.51" y="30.05" width="5.98" height="2" fill="#7a5fb1"/><rect x="28.49" y="30.05" width="1.20" height="2" fill="#8b8b87"/><rect x="10.56" y="33.05" width="9.56" height="2" fill="#8b8b87"/><rect x="21.32" y="33.05" width="4.78" height="2" fill="#8b8b87"/><rect x="26.10" y="33.05" width="16.73" height="2" fill="#6f9a24"/><rect x="42.83" y="33.05" width="1.20" height="2" fill="#8b8b87"/><rect x="44.02" y="33.05" width="5.98" height="2" fill="#9b9556"/><rect x="50.00" y="33.05" width="1.20" height="2" fill="#8b8b87"/><rect x="52.39" y="33.05" width="2.39" height="2" fill="#a12a5e"/><rect x="55.97" y="33.05" width="8.37" height="2" fill="#9b9556"/><rect x="64.34" y="33.05" width="1.20" height="2" fill="#8b8b87"/><rect x="10.56" y="36.06" width="7.17" height="2" fill="#8b8b87"/><rect x="18.93" y="36.06" width="2.39" height="2" fill="#9b9556"/><rect x="21.32" y="36.06" width="1.20" height="2" fill="#8b8b87"/><rect x="10.56" y="39.06" width="8.37" height="2" fill="#8b8b87"/><rect x="20.12" y="39.06" width="4.78" height="2" fill="#7a5fb1"/><rect x="24.90" y="39.06" width="1.20" height="2" fill="#8b8b87"/><rect x="10.56" y="42.07" width="7.17" height="2" fill="#8b8b87"/><rect x="18.93" y="42.07" width="4.78" height="2" fill="#7a5fb1"/><rect x="23.71" y="42.07" width="1.20" height="2" fill="#8b8b87"/><rect x="10.56" y="45.07" width="10.76" height="2" fill="#8b8b87"/><rect x="22.51" y="45.07" width="3.58" height="2" fill="#8b8b87"/><rect x="10.56" y="48.08" width="10.76" height="2" fill="#8b8b87"/><rect x="22.51" y="48.08" width="1.20" height="2" fill="#7a5fb1"/><rect x="23.71" y="48.08" width="1.20" height="2" fill="#8b8b87"/><rect x="10.56" y="51.09" width="14.34" height="2" fill="#8b8b87"/><rect x="26.10" y="51.09" width="1.20" height="2" fill="#7a5fb1"/><rect x="27.29" y="51.09" width="1.20" height="2" fill="#8b8b87"/><rect x="10.56" y="54.09" width="5.98" height="2" fill="#8b8b87"/><rect x="17.73" y="54.09" width="4.78" height="2" fill="#8b8b87"/><rect x="22.51" y="54.09" width="16.73" height="2" fill="#6f9a24"/><rect x="39.24" y="54.09" width="1.20" height="2" fill="#8b8b87"/><rect x="40.44" y="54.09" width="7.17" height="2" fill="#9b9556"/><rect x="47.61" y="54.09" width="1.20" height="2" fill="#8b8b87"/><rect x="50.00" y="54.09" width="2.39" height="2" fill="#a12a5e"/><rect x="53.58" y="54.09" width="4.78" height="2" fill="#9b9556"/><rect x="5.78" y="57.09" width="2.39" height="2" fill="#8b8b87"/><rect x="5.78" y="60.10" width="11.95" height="2" fill="#8b8b87"/><rect x="18.93" y="60.10" width="1.20" height="2" fill="#8b8b87"/><rect x="10.56" y="63.10" width="8.37" height="2" fill="#6f9a24"/><rect x="18.93" y="63.10" width="1.20" height="2" fill="#8b8b87"/><rect x="20.12" y="63.10" width="5.98" height="2" fill="#b46f1f"/><rect x="26.10" y="63.10" width="1.20" height="2" fill="#8b8b87"/><rect x="28.49" y="63.10" width="4.78" height="2" fill="#b46f1f"/><rect x="33.27" y="63.10" width="1.20" height="2" fill="#8b8b87"/><rect x="35.66" y="63.10" width="1.20" height="2" fill="#8b8b87"/><rect x="15.34" y="66.11" width="11.95" height="2" fill="#8b8b87"/><rect x="28.49" y="66.11" width="1.20" height="2" fill="#a12a5e"/><rect x="30.88" y="66.11" width="4.78" height="2" fill="#8b8b87"/><rect x="10.56" y="69.11" width="2.39" height="2" fill="#8b8b87"/><rect x="10.56" y="72.12" width="5.98" height="2" fill="#6f9a24"/><rect x="16.54" y="72.12" width="1.20" height="2" fill="#8b8b87"/><rect x="17.73" y="72.12" width="5.98" height="2" fill="#b46f1f"/><rect x="23.71" y="72.12" width="1.20" height="2" fill="#8b8b87"/><rect x="26.10" y="72.12" width="2.39" height="2" fill="#b46f1f"/><rect x="28.49" y="72.12" width="1.20" height="2" fill="#8b8b87"/><rect x="30.88" y="72.12" width="1.20" height="2" fill="#8b8b87"/><rect x="15.34" y="75.12" width="15.54" height="2" fill="#8b8b87"/><rect x="32.07" y="75.12" width="1.20" height="2" fill="#a12a5e"/><rect x="34.46" y="75.12" width="2.39" height="2" fill="#8b8b87"/><rect x="15.34" y="78.13" width="2.39" height="2" fill="#a12a5e"/><rect x="18.93" y="78.13" width="1.20" height="2" fill="#8b8b87"/><rect x="20.12" y="78.13" width="8.37" height="2" fill="#9b9556"/><rect x="29.68" y="78.13" width="2.39" height="2" fill="#a12a5e"/><rect x="33.27" y="78.13" width="3.58" height="2" fill="#8b8b87"/><rect x="38.05" y="78.13" width="1.20" height="2" fill="#8b8b87"/><rect x="20.12" y="81.13" width="4.78" height="2" fill="#8b8b87"/><rect x="24.90" y="81.13" width="16.73" height="2" fill="#6f9a24"/><rect x="41.63" y="81.13" width="1.20" height="2" fill="#8b8b87"/><rect x="42.83" y="81.13" width="10.76" height="2" fill="#9b9556"/><rect x="53.58" y="81.13" width="1.20" height="2" fill="#8b8b87"/><rect x="55.97" y="81.13" width="4.78" height="2" fill="#7a5fb1"/><rect x="60.75" y="81.13" width="1.20" height="2" fill="#8b8b87"/><rect x="20.12" y="84.14" width="4.78" height="2" fill="#8b8b87"/><rect x="24.90" y="84.14" width="16.73" height="2" fill="#6f9a24"/><rect x="41.63" y="84.14" width="1.20" height="2" fill="#8b8b87"/><rect x="42.83" y="84.14" width="5.98" height="2" fill="#9b9556"/><rect x="48.80" y="84.14" width="1.20" height="2" fill="#8b8b87"/><rect x="51.19" y="84.14" width="8.37" height="2" fill="#9b9556"/><rect x="59.55" y="84.14" width="1.20" height="2" fill="#8b8b87"/><rect x="15.34" y="87.14" width="1.20" height="2" fill="#8b8b87"/><rect x="17.73" y="87.14" width="4.78" height="2" fill="#a12a5e"/><rect x="23.71" y="87.14" width="1.20" height="2" fill="#8b8b87"/><rect x="20.12" y="90.15" width="4.78" height="2" fill="#8b8b87"/><rect x="24.90" y="90.15" width="16.73" height="2" fill="#6f9a24"/><rect x="41.63" y="90.15" width="1.20" height="2" fill="#8b8b87"/><rect x="42.83" y="90.15" width="10.76" height="2" fill="#9b9556"/><rect x="53.58" y="90.15" width="1.20" height="2" fill="#8b8b87"/><rect x="55.97" y="90.15" width="5.98" height="2" fill="#7a5fb1"/><rect x="61.95" y="90.15" width="1.20" height="2" fill="#8b8b87"/><rect x="20.12" y="93.16" width="4.78" height="2" fill="#8b8b87"/><rect x="24.90" y="93.16" width="16.73" height="2" fill="#6f9a24"/><rect x="41.63" y="93.16" width="1.20" height="2" fill="#8b8b87"/><rect x="42.83" y="93.16" width="5.98" height="2" fill="#9b9556"/><rect x="48.80" y="93.16" width="1.20" height="2" fill="#8b8b87"/><rect x="51.19" y="93.16" width="8.37" height="2" fill="#9b9556"/><rect x="59.55" y="93.16" width="1.20" height="2" fill="#8b8b87"/><rect x="15.34" y="96.16" width="2.39" height="2" fill="#8b8b87"/><rect x="10.56" y="102.17" width="2.39" height="2" fill="#8b8b87"/><rect x="10.56" y="105.17" width="20.32" height="2" fill="#6f9a24"/><rect x="30.88" y="105.17" width="1.20" height="2" fill="#8b8b87"/><rect x="32.07" y="105.17" width="5.98" height="2" fill="#b46f1f"/><rect x="38.05" y="105.17" width="1.20" height="2" fill="#8b8b87"/><rect x="40.44" y="105.17" width="5.98" height="2" fill="#b46f1f"/><rect x="46.41" y="105.17" width="1.20" height="2" fill="#8b8b87"/><rect x="48.80" y="105.17" width="1.20" height="2" fill="#8b8b87"/><rect x="15.34" y="108.18" width="20.32" height="2" fill="#8b8b87"/><rect x="36.85" y="108.18" width="1.20" height="2" fill="#a12a5e"/><rect x="39.24" y="108.18" width="8.37" height="2" fill="#8b8b87"/><rect x="10.56" y="111.19" width="2.39" height="2" fill="#8b8b87"/><rect x="10.56" y="114.19" width="9.56" height="2" fill="#6f9a24"/><rect x="20.12" y="114.19" width="1.20" height="2" fill="#8b8b87"/><rect x="21.32" y="114.19" width="5.98" height="2" fill="#b46f1f"/><rect x="27.29" y="114.19" width="1.20" height="2" fill="#8b8b87"/><rect x="29.68" y="114.19" width="5.98" height="2" fill="#b46f1f"/><rect x="35.66" y="114.19" width="1.20" height="2" fill="#8b8b87"/><rect x="38.05" y="114.19" width="1.20" height="2" fill="#8b8b87"/><rect x="15.34" y="117.19" width="16.73" height="2" fill="#8b8b87"/><rect x="33.27" y="117.19" width="1.20" height="2" fill="#a12a5e"/><rect x="35.66" y="117.19" width="5.98" height="2" fill="#8b8b87"/><rect x="10.56" y="120.20" width="2.39" height="2" fill="#8b8b87"/><rect x="10.56" y="123.20" width="15.54" height="2" fill="#6f9a24"/><rect x="26.10" y="123.20" width="2.39" height="2" fill="#8b8b87"/><rect x="30.88" y="123.20" width="1.20" height="2" fill="#8b8b87"/><rect x="15.34" y="126.21" width="16.73" height="2" fill="#8b8b87"/><rect x="33.27" y="126.21" width="1.20" height="2" fill="#a12a5e"/><rect x="35.66" y="126.21" width="4.78" height="2" fill="#7a5fb1"/><rect x="10.56" y="132.22" width="2.39" height="2" fill="#8b8b87"/><rect x="10.56" y="135.22" width="5.98" height="2" fill="#6f9a24"/><rect x="16.54" y="135.22" width="1.20" height="2" fill="#8b8b87"/><rect x="17.73" y="135.22" width="5.98" height="2" fill="#b46f1f"/><rect x="23.71" y="135.22" width="1.20" height="2" fill="#8b8b87"/><rect x="26.10" y="135.22" width="5.98" height="2" fill="#b46f1f"/><rect x="32.07" y="135.22" width="1.20" height="2" fill="#8b8b87"/><rect x="34.46" y="135.22" width="1.20" height="2" fill="#8b8b87"/><rect x="15.34" y="141.23" width="16.73" height="2" fill="#8b8b87"/><rect x="33.27" y="141.23" width="1.20" height="2" fill="#a12a5e"/><rect x="35.66" y="141.23" width="4.78" height="2" fill="#7a5fb1"/><rect x="15.34" y="144.24" width="13.15" height="2" fill="#8b8b87"/><rect x="29.68" y="144.24" width="1.20" height="2" fill="#a12a5e"/><rect x="32.07" y="144.24" width="5.98" height="2" fill="#8b8b87"/><rect x="15.34" y="147.25" width="4.78" height="2" fill="#8b8b87"/><rect x="20.12" y="147.25" width="16.73" height="2" fill="#6f9a24"/><rect x="36.85" y="147.25" width="1.20" height="2" fill="#8b8b87"/><rect x="38.05" y="147.25" width="9.56" height="2" fill="#9b9556"/><rect x="48.80" y="147.25" width="7.17" height="2" fill="#8b8b87"/><rect x="10.56" y="150.25" width="2.39" height="2" fill="#8b8b87"/><rect x="10.56" y="153.25" width="7.17" height="2" fill="#6f9a24"/><rect x="17.73" y="153.25" width="1.20" height="2" fill="#8b8b87"/><rect x="18.93" y="153.25" width="5.98" height="2" fill="#b46f1f"/><rect x="24.90" y="153.25" width="1.20" height="2" fill="#8b8b87"/><rect x="27.29" y="153.25" width="2.39" height="2" fill="#8b8b87"/><rect x="15.34" y="156.26" width="13.15" height="2" fill="#8b8b87"/><rect x="29.68" y="156.26" width="1.20" height="2" fill="#a12a5e"/><rect x="32.07" y="156.26" width="2.39" height="2" fill="#8b8b87"/><rect x="15.34" y="159.26" width="13.15" height="2" fill="#8b8b87"/><rect x="29.68" y="159.26" width="1.20" height="2" fill="#a12a5e"/><rect x="32.07" y="159.26" width="2.39" height="2" fill="#9b9556"/><rect x="15.34" y="162.27" width="4.78" height="2" fill="#8b8b87"/><rect x="20.12" y="162.27" width="20.32" height="2" fill="#6f9a24"/><rect x="40.44" y="162.27" width="1.20" height="2" fill="#8b8b87"/><rect x="41.63" y="162.27" width="8.37" height="2" fill="#9b9556"/><rect x="15.34" y="165.28" width="4.78" height="2" fill="#8b8b87"/><rect x="20.12" y="165.28" width="20.32" height="2" fill="#6f9a24"/><rect x="40.44" y="165.28" width="1.20" height="2" fill="#8b8b87"/><rect x="41.63" y="165.28" width="9.56" height="2" fill="#9b9556"/><rect x="15.34" y="168.28" width="16.73" height="2" fill="#8b8b87"/><rect x="33.27" y="168.28" width="1.20" height="2" fill="#a12a5e"/><rect x="35.66" y="168.28" width="5.98" height="2" fill="#7a5fb1"/><rect x="10.56" y="171.28" width="2.39" height="2" fill="#8b8b87"/><rect x="10.56" y="174.29" width="8.37" height="2" fill="#6f9a24"/><rect x="18.93" y="174.29" width="1.20" height="2" fill="#8b8b87"/><rect x="20.12" y="174.29" width="5.98" height="2" fill="#b46f1f"/><rect x="26.10" y="174.29" width="1.20" height="2" fill="#8b8b87"/><rect x="28.49" y="174.29" width="4.78" height="2" fill="#b46f1f"/><rect x="33.27" y="174.29" width="1.20" height="2" fill="#8b8b87"/><rect x="35.66" y="174.29" width="1.20" height="2" fill="#8b8b87"/><rect x="15.34" y="177.29" width="14.34" height="2" fill="#8b8b87"/><rect x="30.88" y="177.29" width="1.20" height="2" fill="#a12a5e"/><rect x="33.27" y="177.29" width="4.78" height="2" fill="#8b8b87"/><rect x="15.34" y="180.30" width="4.78" height="2" fill="#8b8b87"/><rect x="20.12" y="180.30" width="16.73" height="2" fill="#6f9a24"/><rect x="36.85" y="180.30" width="1.20" height="2" fill="#8b8b87"/><rect x="38.05" y="180.30" width="8.37" height="2" fill="#9b9556"/><rect x="46.41" y="180.30" width="1.20" height="2" fill="#8b8b87"/><rect x="48.80" y="180.30" width="5.98" height="2" fill="#3d8ea1"/><rect x="54.78" y="180.30" width="10.76" height="2" fill="#3d8ea1"/><rect x="65.53" y="180.30" width="8.37" height="2" fill="#8b8b87"/><rect x="10.56" y="183.31" width="2.39" height="2" fill="#8b8b87"/><rect x="10.56" y="186.31" width="13.15" height="2" fill="#6f9a24"/><rect x="23.71" y="186.31" width="1.20" height="2" fill="#8b8b87"/><rect x="24.90" y="186.31" width="5.98" height="2" fill="#b46f1f"/><rect x="30.88" y="186.31" width="1.20" height="2" fill="#8b8b87"/><rect x="33.27" y="186.31" width="4.78" height="2" fill="#b46f1f"/><rect x="38.05" y="186.31" width="1.20" height="2" fill="#8b8b87"/><rect x="40.44" y="186.31" width="1.20" height="2" fill="#8b8b87"/><rect x="15.34" y="189.31" width="16.73" height="2" fill="#8b8b87"/><rect x="33.27" y="189.31" width="1.20" height="2" fill="#a12a5e"/><rect x="35.66" y="189.31" width="4.78" height="2" fill="#8b8b87"/><rect x="10.56" y="195.32" width="2.39" height="2" fill="#8b8b87"/><rect x="10.56" y="198.33" width="9.56" height="2" fill="#6f9a24"/><rect x="20.12" y="198.33" width="5.98" height="2" fill="#b46f1f"/><rect x="26.10" y="198.33" width="2.39" height="2" fill="#8b8b87"/><rect x="29.68" y="198.33" width="1.20" height="2" fill="#8b8b87"/><rect x="15.34" y="201.33" width="3.58" height="2" fill="#3d8ea1"/><rect x="20.12" y="201.33" width="4.78" height="2" fill="#8b8b87"/><rect x="26.10" y="201.33" width="1.20" height="2" fill="#a12a5e"/><rect x="28.49" y="201.33" width="4.78" height="2" fill="#8b8b87"/><rect x="33.27" y="201.33" width="16.73" height="2" fill="#6f9a24"/><rect x="50.00" y="201.33" width="1.20" height="2" fill="#8b8b87"/><rect x="51.19" y="201.33" width="8.37" height="2" fill="#9b9556"/><rect x="59.55" y="201.33" width="1.20" height="2" fill="#8b8b87"/><rect x="15.34" y="204.34" width="2.39" height="2" fill="#a12a5e"/><rect x="18.93" y="204.34" width="7.17" height="2" fill="#8b8b87"/><rect x="27.29" y="204.34" width="2.39" height="2" fill="#8b8b87"/><rect x="20.12" y="207.34" width="4.78" height="2" fill="#b46f1f"/><rect x="24.90" y="207.34" width="5.98" height="2" fill="#8b8b87"/><rect x="32.07" y="207.34" width="1.20" height="2" fill="#a12a5e"/><rect x="34.46" y="207.34" width="4.78" height="2" fill="#3d8ea1"/><rect x="39.24" y="207.34" width="2.39" height="2" fill="#8b8b87"/><rect x="41.63" y="207.34" width="7.17" height="2" fill="#3d8ea1"/><rect x="48.80" y="207.34" width="7.17" height="2" fill="#8b8b87"/><rect x="20.12" y="210.35" width="4.78" height="2" fill="#b46f1f"/><rect x="24.90" y="210.35" width="10.76" height="2" fill="#8b8b87"/><rect x="36.85" y="210.35" width="1.20" height="2" fill="#a12a5e"/><rect x="39.24" y="210.35" width="4.78" height="2" fill="#7a5fb1"/><rect x="15.34" y="213.35" width="2.39" height="2" fill="#8b8b87"/><rect x="10.56" y="216.36" width="1.20" height="2" fill="#8b8b87"/><rect x="5.78" y="225.38" width="2.39" height="2" fill="#8b8b87"/><rect x="5.78" y="228.38" width="9.56" height="2" fill="#8b8b87"/><rect x="16.54" y="228.38" width="1.20" height="2" fill="#8b8b87"/><rect x="10.56" y="231.38" width="15.54" height="2" fill="#6f9a24"/><rect x="26.10" y="231.38" width="2.39" height="2" fill="#8b8b87"/><rect x="15.34" y="234.39" width="5.98" height="2" fill="#b46f1f"/><rect x="21.32" y="234.39" width="2.39" height="2" fill="#8b8b87"/><rect x="15.34" y="237.39" width="9.56" height="2" fill="#b46f1f"/><rect x="10.56" y="240.40" width="2.39" height="2" fill="#8b8b87"/><rect x="14.15" y="240.40" width="1.20" height="2" fill="#8b8b87"/><rect x="15.34" y="246.41" width="5.98" height="2" fill="#3d8ea1"/><rect x="22.51" y="246.41" width="8.37" height="2" fill="#8b8b87"/><rect x="32.07" y="246.41" width="1.20" height="2" fill="#a12a5e"/><rect x="34.46" y="246.41" width="2.39" height="2" fill="#6f9a24"/><rect x="36.85" y="246.41" width="26.29" height="2" fill="#9b9556"/><rect x="63.14" y="246.41" width="1.20" height="2" fill="#8b8b87"/><rect x="65.53" y="246.41" width="1.20" height="2" fill="#8b8b87"/><rect x="20.12" y="249.41" width="7.17" height="2" fill="#8b8b87"/><rect x="28.49" y="249.41" width="2.39" height="2" fill="#8b8b87"/><rect x="20.12" y="252.42" width="13.15" height="2" fill="#8b8b87"/><rect x="34.46" y="252.42" width="14.34" height="2" fill="#9b9556"/><rect x="50.00" y="252.42" width="13.15" height="2" fill="#9b9556"/><rect x="20.12" y="255.42" width="15.54" height="2" fill="#8b8b87"/><rect x="36.85" y="255.42" width="4.78" height="2" fill="#7a5fb1"/><rect x="41.63" y="255.42" width="1.20" height="2" fill="#8b8b87"/><rect x="20.12" y="258.43" width="9.56" height="2" fill="#8b8b87"/><rect x="30.88" y="258.43" width="4.78" height="2" fill="#7a5fb1"/><rect x="15.34" y="264.44" width="3.58" height="2" fill="#8b8b87"/><rect x="15.34" y="279.46" width="10.76" height="2" fill="#8b8b87"/><rect x="26.10" y="279.46" width="2.39" height="2" fill="#6f9a24"/><rect x="28.49" y="279.46" width="1.20" height="2" fill="#8b8b87"/><rect x="29.68" y="279.46" width="11.95" height="2" fill="#9b9556"/><rect x="41.63" y="279.46" width="1.20" height="2" fill="#8b8b87"/><rect x="44.02" y="279.46" width="1.20" height="2" fill="#8b8b87"/><rect x="46.41" y="279.46" width="3.58" height="2" fill="#3d8ea1"/><rect x="51.19" y="279.46" width="1.20" height="2" fill="#8b8b87"/><rect x="20.12" y="282.47" width="9.56" height="2" fill="#8b8b87"/><rect x="29.68" y="282.47" width="1.20" height="2" fill="#a12a5e"/><rect x="30.88" y="282.47" width="3.58" height="2" fill="#3d8ea1"/><rect x="34.46" y="282.47" width="9.56" height="2" fill="#9b9556"/><rect x="20.12" y="285.47" width="14.34" height="2" fill="#8b8b87"/><rect x="35.66" y="285.47" width="1.20" height="2" fill="#a12a5e"/><rect x="38.05" y="285.47" width="8.37" height="2" fill="#8b8b87"/><rect x="20.12" y="288.48" width="5.98" height="2" fill="#3d8ea1"/><rect x="27.29" y="288.48" width="2.39" height="2" fill="#8b8b87"/><rect x="24.90" y="291.49" width="2.39" height="2" fill="#8b8b87"/><rect x="20.12" y="294.49" width="1.20" height="2" fill="#8b8b87"/><rect x="23.71" y="294.49" width="1.20" height="2" fill="#a12a5e"/><rect x="26.10" y="294.49" width="7.17" height="2" fill="#8b8b87"/><rect x="15.34" y="303.50" width="3.58" height="2" fill="#8b8b87"/><rect x="15.34" y="309.51" width="10.76" height="2" fill="#8b8b87"/><rect x="26.10" y="309.51" width="2.39" height="2" fill="#6f9a24"/><rect x="28.49" y="309.51" width="10.76" height="2" fill="#9b9556"/><rect x="39.24" y="309.51" width="1.20" height="2" fill="#8b8b87"/><rect x="41.63" y="309.51" width="2.39" height="2" fill="#8b8b87"/><rect x="45.22" y="309.51" width="2.39" height="2" fill="#3d8ea1"/><rect x="48.80" y="309.51" width="1.20" height="2" fill="#8b8b87"/><rect x="20.12" y="312.52" width="15.54" height="2" fill="#8b8b87"/><rect x="36.85" y="312.52" width="1.20" height="2" fill="#a12a5e"/><rect x="39.24" y="312.52" width="4.78" height="2" fill="#7a5fb1"/><rect x="20.12" y="315.52" width="9.56" height="2" fill="#8b8b87"/><rect x="29.68" y="315.52" width="1.20" height="2" fill="#a12a5e"/><rect x="30.88" y="315.52" width="3.58" height="2" fill="#3d8ea1"/><rect x="34.46" y="315.52" width="10.76" height="2" fill="#9b9556"/><rect x="15.34" y="318.53" width="3.58" height="2" fill="#8b8b87"/><rect x="15.34" y="321.53" width="10.76" height="2" fill="#8b8b87"/><rect x="26.10" y="321.53" width="2.39" height="2" fill="#6f9a24"/><rect x="28.49" y="321.53" width="15.54" height="2" fill="#9b9556"/><rect x="45.22" y="321.53" width="3.58" height="2" fill="#8b8b87"/><rect x="50.00" y="321.53" width="2.39" height="2" fill="#3d8ea1"/><rect x="53.58" y="321.53" width="1.20" height="2" fill="#8b8b87"/><rect x="20.12" y="324.54" width="15.54" height="2" fill="#8b8b87"/><rect x="36.85" y="324.54" width="1.20" height="2" fill="#a12a5e"/><rect x="39.24" y="324.54" width="4.78" height="2" fill="#7a5fb1"/><rect x="20.12" y="327.55" width="9.56" height="2" fill="#8b8b87"/><rect x="29.68" y="327.55" width="1.20" height="2" fill="#a12a5e"/><rect x="30.88" y="327.55" width="3.58" height="2" fill="#3d8ea1"/><rect x="34.46" y="327.55" width="10.76" height="2" fill="#9b9556"/><rect x="15.34" y="330.55" width="3.58" height="2" fill="#8b8b87"/><rect x="10.56" y="333.56" width="1.20" height="2" fill="#8b8b87"/><rect x="5.78" y="336.56" width="1.20" height="2" fill="#8b8b87"/><rect x="1.00" y="339.56" width="2.39" height="2" fill="#8b8b87"/></svg>
<div class="b" style="left:1125px;top:96px;width:8px;height:147px;background:#7e7e7c;"></div>
<div class="b" style="left:1133px;top:60px;width:1px;height:721px;background:#191a16;"></div>
<div class="b" style="left:0px;top:782px;width:1134px;height:200px;background:#21221e;"></div>
<div class="b" style="left:0px;top:781px;width:1134px;height:1px;background:#151612;"></div>
<div class="t" style="top:804.8px;font-size:13.8px;line-height:20px;color:#f0f0f0;font-family:'Liberation Sans',sans-serif;left:23px;">st5_lcai - Web</div>
<div class="b" style="left:18px;top:828px;width:117px;height:1px;background:#c8c8c8;"></div>
<svg class="b" style="left:953px;top:806px;" width="16" height="16" viewBox="0 0 16 16"><path d="M4.8 7Q4.8 2.2 8 2.2Q11.2 2.2 11.2 7V10.5Q11.2 14 8 14Q4.8 14 4.8 10.5Z" fill="none" stroke="#c4c4c0" stroke-width="1.1"/><path d="M8 4V14M4.8 5.8H11.2" stroke="#c4c4c0" stroke-width="1" fill="none"/><path d="M2.2 4.5L4.6 6.3M13.8 4.5L11.4 6.3M1.8 9H4.8M11.2 9H14.2M2.2 13.2L4.8 11.5M13.8 13.2L11.2 11.5" stroke="#c4c4c0" stroke-width="1" fill="none"/></svg>
<svg class="b" style="left:983px;top:806px;" width="16" height="16" viewBox="0 0 16 16"><path d="M4.2 4A5.9 5.9 0 1 1 3.1 8.2" fill="none" stroke="#c4c4c0" stroke-width="1.1"/><path d="M2.6 1.8L4.3 4.4L7 3.6" fill="none" stroke="#c4c4c0" stroke-width="1"/><path d="M7 5.3L11.3 7.9L7 10.5Z" fill="#c4c4c0"/></svg>
<svg class="b" style="left:1016px;top:808px;" width="12" height="12" viewBox="0 0 12 12"><rect x="0.5" y="0.5" width="11" height="11" fill="none" stroke="#c4c4c0" stroke-width="1"/><rect x="2.3" y="2.3" width="7.4" height="7.4" fill="#dcdcdc"/></svg>
<svg class="b" style="left:1043px;top:806px;" width="16" height="16" viewBox="0 0 16 16"><path d="M10 2.5H1.5V14.5H14.5V8" fill="none" stroke="#c4c4c0" stroke-width="1.1"/><path d="M4 6L6.5 8.5L4 11M8 11.5H11" fill="none" stroke="#c4c4c0" stroke-width="1"/><path d="M10.5 3.5H15.5M13 1V6" stroke="#c4c4c0" stroke-width="1.1"/></svg>
<svg class="b" style="left:1074px;top:809px;" width="16" height="10" viewBox="0 0 16 10"><path d="M1.5 8.5L8 1.5L14.5 8.5" fill="none" stroke="#c4c4c0" stroke-width="1.2"/></svg>
<svg class="b" style="left:1103px;top:807px;" width="18" height="14" viewBox="0 0 18 14"><path d="M1.5 2L9 12M9 2L1.5 12" stroke="#c4c4c0" stroke-width="1.1"/><path d="M14 2V11.5M11.5 9L14 11.8L16.5 9" fill="none" stroke="#c4c4c0" stroke-width="1.1"/></svg>
<div class="b" style="left:0;top:781px;width:1134px;height:201px;overflow:hidden"><div class="t" style="left:32px;top:66px;font:15px/20px 'Liberation Mono',monospace;color:#f4f4f0;white-space:pre"><span style="color:#b8b8b4">20:02:17.142</span> {url: &quot;<span style="color:#46b4f0;text-decoration:underline">https://st5.amspay.cc/api/v1/klineMarket</span>&quot;, data: { <span style="color:#46b4f0;text-decoration:underline">...</span> }, method: &quot;<span style="color:#e6db74">POST</span>&quot;, header: { <span style="color:#46b4f0;text-decoration:underline">...</span> }} <span style="color:#46b4f0;text-decoration:underline">at common</span></div><div class="t" style="left:32px;top:86px;font:15px/20px 'Liberation Mono',monospace;color:#f4f4f0;white-space:pre"><span style="color:#46b4f0;text-decoration:underline">/request.js:14</span></div><div class="t" style="left:32px;top:106px;font:15px/20px 'Liberation Mono',monospace;color:#f4f4f0;white-space:pre"><span style="color:#b8b8b4">20:02:18.049</span> [KLineChartContainer::RequestFlowCapitalData] symbol=btcusdt.BIT not need download data. <span style="color:#46b4f0;text-decoration:underline">at uni_modules/jon</span></div><div class="t" style="left:32px;top:126px;font:15px/20px 'Liberation Mono',monospace;color:#f4f4f0;white-space:pre"><span style="color:#46b4f0;text-decoration:underline">es-hqchart2/js_sdk/umychart.uniapp.h5.js:71122</span></div><div class="t" style="left:32px;top:146px;font:15px/20px 'Liberation Mono',monospace;color:#f4f4f0;white-space:pre"><span style="color:#b8b8b4">20:02:18.050</span> [FrameSplitKLinePriceY::Operator] Max=65000 Min=52551.12 Count=8 isPhoneModel=true defaultfloatPrecision=5</div><div class="t" style="left:32px;top:166px;font:15px/20px 'Liberation Mono',monospace;color:#f4f4f0;white-space:pre"> <span style="color:#46b4f0;text-decoration:underline">at uni_modules/jones-hqchart2/js_sdk/umychart.uniapp.h5.js:45922</span></div><div class="t" style="left:32px;top:186px;font:15px/20px 'Liberation Mono',monospace;color:#f4f4f0;white-space:pre"><span style="color:#b8b8b4">20:02:18.050</span> [FrameSplitKLinePriceY::Operator] fixed . Max=65000 Min=52551.12 Count=8 <span style="color:#46b4f0;text-decoration:underline">at uni_modules/jones-hqchart2/js_s</span></div></div>
<div class="b" style="left:1125px;top:968px;width:8px;height:14px;background:#2c2d28;"></div>
<div class="b" style="left:0px;top:982px;width:1519px;height:25px;background:#535353;"></div>
<svg class="b" style="left:28.7px;top:986.7px;" width="14.6" height="14.6" viewBox="0 0 16 16"><circle cx="8" cy="8" r="7" fill="none" stroke="#b4b4b4" stroke-width="1.2"/><circle cx="8" cy="6" r="2.6" fill="#b4b4b4"/><path d="M3 12.8Q4 9.3 8 9.3Q12 9.3 13 12.8Q10.8 15 8 15Q5.2 15 3 12.8Z" fill="#b4b4b4"/></svg>
<div class="t" style="top:984.5px;font-size:12.9px;line-height:20px;color:#e8e8e8;font-family:'Liberation Sans',sans-serif;left:49px;">1735031199@qq.com</div>
<svg class="b" style="left:234px;top:988px;" width="14" height="13" viewBox="0 0 14 13"><path d="M1 2.5H3M1 6.5H3M1 10.5H3M5 2.5H13M5 6.5H13M5 10.5H13" stroke="#e0e0e0" stroke-width="1.3"/></svg>
<svg class="b" style="left:259px;top:988px;" width="14" height="13" viewBox="0 0 14 13"><rect x="0.5" y="1.5" width="13" height="10" fill="none" stroke="#e0e0e0" stroke-width="1"/><path d="M3 4L5.5 6.5L3 9M7 9.2H10" fill="none" stroke="#e0e0e0" stroke-width="1"/></svg>
<div class="t" style="top:983.8px;font-size:12.2px;line-height:20px;color:#e8e8e8;font-family:'Liberation Sans','Noto Sans CJK SC',sans-serif;left:1103px;">语法提示库</div>
<div class="t" style="top:984.5px;font-size:12.5px;line-height:20px;color:#e8e8e8;font-family:'Liberation Sans','Noto Sans CJK SC',sans-serif;left:1190px;">行:83</div>
<div class="t" style="top:984.5px;font-size:12.5px;line-height:20px;color:#e8e8e8;font-family:'Liberation Sans','Noto Sans CJK SC',sans-serif;left:1228px;">列:39</div>
<div class="t" style="top:984.5px;font-size:12.5px;line-height:20px;color:#e8e8e8;font-family:'Liberation Sans',sans-serif;left:1283px;">UTF-8</div>
<div class="t" style="top:984.5px;font-size:12.8px;line-height:20px;color:#e8e8e8;font-family:'Liberation Sans',sans-serif;left:1343px;">JavaScript</div>
<svg class="b" style="left:1421px;top:989.5px;" width="15" height="14" viewBox="0 0 15 14"><ellipse cx="6.8" cy="6" rx="6.6" ry="5.6" fill="#f4f4f4"/><path d="M8 10.5L13.6 13.2L11.5 8.5Z" fill="#f4f4f4"/><path d="M4.2 3.6V8.4H9.4V3.6" fill="none" stroke="#535353" stroke-width="1.5"/></svg>
<svg class="b" style="left:1449px;top:986px;" width="16" height="16" viewBox="0 0 16 16"><circle cx="8" cy="8" r="7.5" fill="#fafafa"/><path d="M8 3.5V11.5M4.8 8.5L8 11.8L11.2 8.5" fill="none" stroke="#333" stroke-width="1.4"/></svg>
<svg class="b" style="left:1479px;top:987px;" width="14" height="15" viewBox="0 0 14 15"><path d="M7 1Q11 1.5 11 6.5Q11 9.5 13 11.5H1Q3 9.5 3 6.5Q3 1.5 7 1Z" fill="#b0a47c"/><circle cx="7" cy="13" r="1.5" fill="#b0a47c"/></svg>
<div class="b" style="left:1134px;top:60px;width:385px;height:922px;background:#272822;"></div>
<div class="b" style="left:1134px;top:60px;width:385px;height:29px;background:#1b1d18;"></div>
<div class="b" style="left:1134px;top:60px;width:110px;height:29px;background:#272822;"></div>
<div class="t" style="top:64.5px;font-size:12.5px;line-height:20px;color:#d8d8d8;font-family:'Liberation Sans','Noto Sans CJK SC',sans-serif;left:1145px;">Web浏览器</div>
<svg class="b" style="left:1221px;top:70px;" width="10" height="10" viewBox="0 0 10 10"><path d="M1 1L9 9M9 1L1 9" stroke="#d0d0d0" stroke-width="1"/></svg>
<div class="b" style="left:1140px;top:95px;width:372px;height:27px;border:1px solid #64655f;box-sizing:border-box;"></div>
<div class="t" style="top:98.5px;font-size:13.6px;line-height:20px;color:#d4d4d4;font-family:'Liberation Sans',sans-serif;left:1149px;">http://localhost:8000/#/pages/stock/stock</div>
<div class="b" style="left:1140px;top:127px;width:120px;height:27px;border:1px solid #17182f;box-sizing:border-box;"></div>
<div class="t" style="top:130.5px;font-size:12.6px;line-height:20px;color:#d4d4d4;font-family:'Liberation Sans',sans-serif;left:1146px;">iPhone X</div>
<svg class="b" style="left:1247px;top:138px;" width="8" height="5" viewBox="0 0 8 5"><path d="M0.5 0.5H7.5L4 4.5Z" fill="#e0e0e0"/></svg>
<svg class="b" style="left:1271px;top:132.3px;" width="15" height="15" viewBox="0 0 15 15"><path d="M5.5 2.8H13.3V13.2H2.8V6" fill="none" stroke="#e4e4e4" stroke-width="1.3"/><path d="M1.2 1.6L8.5 8.5M1.2 5.5V1.6H5" fill="none" stroke="#e4e4e4" stroke-width="1.3"/></svg>
<svg class="b" style="left:1301.8px;top:133.4px;" width="13.2" height="13.2" viewBox="0 0 15 15"><path d="M7.5 1.2L9.3 2.3L11.4 2.1L12.3 4L14 5.2L13.5 7.5L14 9.8L12.3 11L11.4 12.9L9.3 12.7L7.5 13.8L5.7 12.7L3.6 12.9L2.7 11L1 9.8L1.5 7.5L1 5.2L2.7 4L3.6 2.1L5.7 2.3Z" fill="none" stroke="#e4e4e4" stroke-width="1.4" stroke-linejoin="round"/><circle cx="7.5" cy="7.5" r="2.3" fill="none" stroke="#e4e4e4" stroke-width="1.4"/></svg>
<svg class="b" style="left:1331px;top:133.7px;" width="15" height="13" viewBox="0 0 15 13"><rect x="0.9" y="0.7" width="13.6" height="11" fill="none" stroke="#e4e4e4" stroke-width="1.3"/><path d="M3.5 3.7L6 6.2L3.5 8.7M7.5 9.2H10.8" fill="none" stroke="#e4e4e4" stroke-width="1.2"/></svg>
<svg class="b" style="left:1361px;top:133.5px;" width="15" height="13" viewBox="0 0 15 13"><path d="M14 6.5H2.5M7 1.7L2 6.5L7 11.3" fill="none" stroke="#f4f4f4" stroke-width="2"/></svg>
<svg class="b" style="left:1391px;top:133.5px;" width="15" height="13" viewBox="0 0 15 13"><path d="M1.2 6.5H13M8.3 1.7L13.3 6.5L8.3 11.3" fill="none" stroke="#a4a4a2" stroke-width="1.7"/></svg>
<svg class="b" style="left:1421.3px;top:132.6px;" width="15" height="15" viewBox="0 0 15 15"><path d="M12.3 4.3A5.8 5.8 0 1 0 13.3 9.6" fill="none" stroke="#e4e4e4" stroke-width="1.3"/><path d="M13.2 1V5H9.2" fill="none" stroke="#e4e4e4" stroke-width="1.3"/></svg>
<svg class="b" style="left:1452px;top:132px;" width="13" height="16" viewBox="0 0 13 16"><rect x="2.2" y="7.7" width="8.6" height="5.8" fill="none" stroke="#e4e4e4" stroke-width="1.3"/><path d="M4 7.7V5.2Q4 2.6 6.5 2.6Q8.6 2.6 9 4.6" fill="none" stroke="#e4e4e4" stroke-width="1.3"/></svg>
<svg class="b" style="left:1483px;top:133.8px;" width="11.6" height="11.6" viewBox="0 0 13 13"><rect x="0.5" y="0.5" width="4.5" height="4.5" fill="none" stroke="#e4e4e4" stroke-width="1.2"/><rect x="8" y="0.5" width="4.5" height="4.5" fill="none" stroke="#e4e4e4" stroke-width="1.2"/><rect x="0.5" y="8" width="4.5" height="4.5" fill="none" stroke="#e4e4e4" stroke-width="1.4"/><path d="M7.5 8.3H10M12.3 7.5V10M8 10.5V13M9.8 12.3H13" stroke="#e4e4e4" stroke-width="1.4"/></svg>
<div class="b" style="left:1134px;top:160px;width:385px;height:1px;background:#1c1d19;"></div>
<div class="b" style="left:1139px;top:165px;width:375px;height:812px;background:#ffffff;background:linear-gradient(#fafafa,#ffffff 60px);"></div>
<div class="b" style="left:1154px;top:185px;width:345px;height:30px;background:#ffffff;border-radius:12px;box-shadow:0 0 14px 3px rgba(0,0,0,0.05);"></div>
<div class="t" style="top:190.0px;font-size:14px;line-height:20px;color:#111;font-family:'Liberation Sans',sans-serif;left:1164px;font-weight:bold;">BTC</div>
<svg class="b" style="left:1193.8px;top:196px;" width="12" height="8" viewBox="0 0 12 8"><path d="M1 1.5L6 6.5L11 1.5" fill="none" stroke="#222" stroke-width="1.3"/></svg>
<div class="t" style="top:190.0px;font-size:16px;line-height:20px;color:#0565ff;font-family:'Liberation Sans',sans-serif;right:90.5px;font-weight:bold;">94791.09000</div>
<div class="t" style="top:190.5px;font-size:13.5px;line-height:20px;color:#0565ff;font-family:'Liberation Sans',sans-serif;left:1439px;">+0.23</div>
<svg class="b" style="left:1475px;top:195px;" width="12" height="7" viewBox="0 0 12 7"><path d="M0.5 6.5L6 0.8L11.5 6.5Z" fill="#0565ff"/></svg>
<div class="b" style="left:1173.8px;top:220px;width:53px;height:24.8px;background:#eeeeee;border-radius:12.4px;"></div>
<div class="t" style="top:222.2px;font-size:14px;line-height:20px;color:#333;font-family:'Liberation Sans',sans-serif;left:1174.5px;width:52px;text-align:center;">1M</div>
<div class="b" style="left:1236.8px;top:220px;width:53px;height:24.8px;background:#eeeeee;border-radius:12.4px;"></div>
<div class="t" style="top:222.2px;font-size:14px;line-height:20px;color:#333;font-family:'Liberation Sans',sans-serif;left:1237.5px;width:52px;text-align:center;">15M</div>
<div class="b" style="left:1299.8px;top:220px;width:53px;height:24.8px;background:#eeeeee;border-radius:12.4px;"></div>
<div class="t" style="top:222.2px;font-size:14px;line-height:20px;color:#333;font-family:'Liberation Sans',sans-serif;left:1300.5px;width:52px;text-align:center;">30M</div>
<div class="b" style="left:1363.8px;top:220px;width:53px;height:24.8px;background:#eeeeee;border-radius:12.4px;"></div>
<div class="t" style="top:222.2px;font-size:14px;line-height:20px;color:#333;font-family:'Liberation Sans',sans-serif;left:1364.5px;width:52px;text-align:center;">1H</div>
<div class="b" style="left:1426.8px;top:220px;width:53px;height:24.8px;background:#0565ff;border-radius:12.4px;"></div>
<div class="t" style="top:222.2px;font-size:14px;line-height:20px;color:#fff;font-family:'Liberation Sans',sans-serif;left:1427.5px;width:52px;text-align:center;">1D</div>
<svg class="b" style="left:0;top:0" width="1519" height="1007" viewBox="0 0 1519 1007"><path d="M1150 290.5H1431" stroke="#f9f9f9" stroke-width="1"/><path d="M1150 329.5H1431" stroke="#f9f9f9" stroke-width="1"/><path d="M1150 368.5H1431" stroke="#f9f9f9" stroke-width="1"/><path d="M1150 406.5H1431" stroke="#f9f9f9" stroke-width="1"/><path d="M1150 445.5H1431" stroke="#f9f9f9" stroke-width="1"/><path d="M1150 484.5H1431" stroke="#f9f9f9" stroke-width="1"/><path d="M1150 522.5H1431" stroke="#f9f9f9" stroke-width="1"/><path d="M1150 561.5H1431" stroke="#f9f9f9" stroke-width="1"/><path d="M1150.5 251V575" stroke="#f8f8f8" stroke-width="1"/><path d="M1263.5 274V575" stroke="#f9f9f9" stroke-width="1"/><path d="M1372.5 274V575" stroke="#f9f9f9" stroke-width="1"/><path d="M1430.5 251V575" stroke="#f8f8f8" stroke-width="1"/><path d="M1150 574.5H1431" stroke="#f9f9f9" stroke-width="1"/><path d="M1150 251.5H1431" stroke="#f7f7f7" stroke-width="1"/><path d="M1150 398.5H1426" stroke="#4a8ff5" stroke-width="1.2" stroke-dasharray="5 5"/><path d="M1155.00 401.9V482.3" stroke="#ee1515" stroke-width="0.9"/><rect x="1152.00" y="406.0" width="6" height="34.6" fill="#ee1515"/><path d="M1163.35 402.8V441.9" stroke="#0565ff" stroke-width="0.9"/><rect x="1160.35" y="417.3" width="6" height="23.3" fill="#0565ff"/><path d="M1171.70 298.0V321.0" stroke="#0565ff" stroke-width="0.9"/><rect x="1168.70" y="309.0" width="6" height="3.0" fill="#0565ff"/><path d="M1180.05 290.0V331.5" stroke="#ee1515" stroke-width="0.9"/><rect x="1177.05" y="309.0" width="6" height="12.5" fill="#ee1515"/><path d="M1188.40 314.4V366.5" stroke="#ee1515" stroke-width="0.9"/><rect x="1185.40" y="321.8" width="6" height="39.2" fill="#ee1515"/><path d="M1196.75 350.6V441.6" stroke="#ee1515" stroke-width="0.9"/><rect x="1193.75" y="361.0" width="6" height="58.6" fill="#ee1515"/><path d="M1205.10 373.4V445.4" stroke="#0565ff" stroke-width="0.9"/><rect x="1202.10" y="381.5" width="6" height="38.1" fill="#0565ff"/><path d="M1213.45 377.8V442.8" stroke="#ee1515" stroke-width="0.9"/><rect x="1210.45" y="381.5" width="6" height="57.9" fill="#ee1515"/><path d="M1221.80 410.6V447.5" stroke="#0565ff" stroke-width="0.9"/><rect x="1218.80" y="420.0" width="6" height="19.4" fill="#0565ff"/><path d="M1230.15 417.1V458.8" stroke="#ee1515" stroke-width="0.9"/><rect x="1227.15" y="420.0" width="6" height="17.3" fill="#ee1515"/><path d="M1238.50 424.4V460.6" stroke="#0565ff" stroke-width="0.9"/><rect x="1235.50" y="430.0" width="6" height="6.6" fill="#0565ff"/><path d="M1246.85 402.8V450.9" stroke="#ee1515" stroke-width="0.9"/><rect x="1243.85" y="430.0" width="6" height="18.8" fill="#ee1515"/><path d="M1255.20 436.3V492.9" stroke="#0565ff" stroke-width="0.9"/><rect x="1252.20" y="439.0" width="6" height="8.9" fill="#0565ff"/><path d="M1263.55 430.3V488.8" stroke="#ee1515" stroke-width="0.9"/><rect x="1260.55" y="439.0" width="6" height="45.7" fill="#ee1515"/><path d="M1271.90 463.1V531.9" stroke="#ee1515" stroke-width="0.9"/><rect x="1268.90" y="485.2" width="6" height="41.7" fill="#ee1515"/><path d="M1280.25 510.3V559.8" stroke="#0565ff" stroke-width="0.9"/><rect x="1277.25" y="511.5" width="6" height="16.0" fill="#0565ff"/><path d="M1288.60 510.3V535.8" stroke="#ee1515" stroke-width="0.9"/><rect x="1285.60" y="511.5" width="6" height="23.5" fill="#ee1515"/><path d="M1296.95 489.4V536.3" stroke="#0565ff" stroke-width="0.9"/><rect x="1293.95" y="499.0" width="6" height="36.0" fill="#0565ff"/><path d="M1305.30 439.8V499.4" stroke="#0565ff" stroke-width="0.9"/><rect x="1302.30" y="472.4" width="6" height="26.1" fill="#0565ff"/><path d="M1313.65 440.9V494.6" stroke="#0565ff" stroke-width="0.9"/><rect x="1310.65" y="470.3" width="6" height="1.8" fill="#0565ff"/><path d="M1322.00 429.4V471.0" stroke="#0565ff" stroke-width="0.9"/><rect x="1319.00" y="445.8" width="6" height="24.2" fill="#0565ff"/><path d="M1330.35 405.0V452.5" stroke="#0565ff" stroke-width="0.9"/><rect x="1327.35" y="406.3" width="6" height="46.2" fill="#0565ff"/><path d="M1338.70 385.4V413.1" stroke="#0565ff" stroke-width="0.9"/><rect x="1335.70" y="401.3" width="6" height="4.6" fill="#0565ff"/><path d="M1347.05 390.0V411.9" stroke="#0565ff" stroke-width="0.9"/><rect x="1344.05" y="391.3" width="6" height="9.6" fill="#0565ff"/><path d="M1355.40 391.0V450.6" stroke="#ee1515" stroke-width="0.9"/><rect x="1352.40" y="391.0" width="6" height="53.4" fill="#ee1515"/><path d="M1363.75 370.3V452.3" stroke="#0565ff" stroke-width="0.9"/><rect x="1360.75" y="375.0" width="6" height="68.8" fill="#0565ff"/><path d="M1372.10 371.9V412.9" stroke="#ee1515" stroke-width="0.9"/><rect x="1369.10" y="375.0" width="6" height="35.6" fill="#ee1515"/><path d="M1380.45 397.3V415.6" stroke="#0565ff" stroke-width="0.9"/><rect x="1377.45" y="398.8" width="6" height="11.8" fill="#0565ff"/></svg>
<div class="t" style="top:273.0px;font-size:12.5px;line-height:20px;color:#fff5e4;font-family:'Liberation Sans',sans-serif;left:1181px;">←65000.00000</div>
<div class="t" style="top:554.5px;font-size:12.5px;line-height:20px;color:#fff5e4;font-family:'Liberation Sans',sans-serif;left:1281px;">←52551.12000</div>
<div class="t" style="top:278.5px;font-size:12.6px;line-height:20px;color:#666;font-family:'Liberation Sans',sans-serif;right:14.5px;">65000.00000</div>
<div class="t" style="top:317.21px;font-size:12.6px;line-height:20px;color:#666;font-family:'Liberation Sans',sans-serif;right:14.5px;">63221.58857</div>
<div class="t" style="top:355.92px;font-size:12.6px;line-height:20px;color:#666;font-family:'Liberation Sans',sans-serif;right:14.5px;">61443.17714</div>
<div class="t" style="top:394.63px;font-size:12.6px;line-height:20px;color:#666;font-family:'Liberation Sans',sans-serif;right:14.5px;">59664.76571</div>
<div class="t" style="top:433.34px;font-size:12.6px;line-height:20px;color:#666;font-family:'Liberation Sans',sans-serif;right:14.5px;">57886.35429</div>
<div class="t" style="top:472.05px;font-size:12.6px;line-height:20px;color:#666;font-family:'Liberation Sans',sans-serif;right:14.5px;">56107.94286</div>
<div class="t" style="top:510.76px;font-size:12.6px;line-height:20px;color:#666;font-family:'Liberation Sans',sans-serif;right:14.5px;">54329.53143</div>
<div class="t" style="top:549.47px;font-size:12.6px;line-height:20px;color:#666;font-family:'Liberation Sans',sans-serif;right:14.5px;">52551.12000</div>
<div class="b" style="left:1430px;top:389px;width:77px;height:18px;background:#0565ff;"></div>
<div class="t" style="top:388.0px;font-size:12.6px;line-height:20px;color:#ffffff;font-family:'Liberation Sans',sans-serif;right:14.5px;">59987.60000</div>
<div class="t" style="top:570.5px;font-size:12.6px;line-height:20px;color:#666;font-family:'Liberation Sans',sans-serif;left:1155px;">2024</div>
<div class="t" style="top:570.5px;font-size:12.6px;line-height:20px;color:#666;font-family:'Liberation Sans',sans-serif;left:1247px;">09-05</div>
<div class="t" style="top:570.5px;font-size:12.6px;line-height:20px;color:#666;font-family:'Liberation Sans',sans-serif;left:1356px;">09-18</div>
<div class="b" style="left:1147px;top:609px;width:359px;height:38px;background:#f5f6fa;border-radius:19px;"></div>
<div class="b" style="left:1152px;top:610px;width:175px;height:37px;background:#0565ff;border-radius:18.5px;"></div>
<div class="b" style="left:1327px;top:610px;width:174px;height:37px;background:#ececec;border-radius:18.5px;"></div>
<div class="t" style="top:616.2px;font-size:14px;line-height:20px;color:#ffffff;font-family:'Liberation Sans','Noto Sans CJK TC',sans-serif;font-weight:500;left:1189.5px;width:100px;text-align:center;">下單交易</div>
<div class="t" style="top:616.2px;font-size:14px;line-height:20px;color:#555;font-family:'Liberation Sans','Noto Sans CJK TC',sans-serif;left:1363.5px;width:100px;text-align:center;">掛單交易</div>
<div class="t" style="top:678.5px;font-size:12px;line-height:20px;color:#222;font-family:'Liberation Sans','Noto Sans CJK TC',sans-serif;font-weight:500;left:1156px;">倍數</div>
<div class="b" style="left:1331px;top:669px;width:174px;height:38px;background:#fff;border:1px solid #d9d9d9;border-radius:4px;box-sizing:border-box;"></div>
<div class="t" style="top:678.5px;font-size:14.5px;line-height:20px;color:#444;font-family:'Liberation Sans',sans-serif;left:1377.5px;width:60px;text-align:center;">400</div>
<svg class="b" style="left:1481px;top:681px;" width="10" height="15" viewBox="0 0 10 15"><path d="M2 1.5L8 7.5L2 13.5" fill="none" stroke="#777" stroke-width="1.3"/></svg>
<div class="t" style="top:733.7px;font-size:12px;line-height:20px;color:#222;font-family:'Liberation Sans','Noto Sans CJK TC',sans-serif;font-weight:500;left:1156px;">止損</div>
<div class="b" style="left:1182px;top:733px;width:39px;height:21px;background:#e5e5e5;border-radius:11px;"></div><div class="b" style="left:1180px;top:733px;width:21px;height:21px;background:#fff;border-radius:50%;box-shadow:0 1px 2px rgba(0,0,0,0.35);"></div>
<div class="b" style="left:1331px;top:725px;width:174px;height:37px;background:#fff;border:1px solid #c9cde6;box-sizing:border-box;"></div><div class="b" style="left:1332px;top:726px;width:35px;height:35px;background:#f5f6fa;"></div><div class="b" style="left:1469px;top:726px;width:35px;height:35px;background:#f5f6fa;"></div><div class="b" style="left:1343px;top:743px;width:12px;height:1px;background:#c4c6d0;height:1.4px;"></div><div class="b" style="left:1481px;top:743px;width:12px;height:1px;background:#c4c6d0;height:1.4px;"></div><div class="b" style="left:1486.3px;top:737.5px;width:1.4px;height:12px;background:#c4c6d0;"></div><div class="t" style="top:733.5px;font-size:15px;line-height:20px;color:#aeb2cc;font-family:'Liberation Sans',sans-serif;left:1397.5px;width:40px;text-align:center;font-weight:bold;">0</div>
<div class="t" style="top:789.0px;font-size:12px;line-height:20px;color:#222;font-family:'Liberation Sans','Noto Sans CJK TC',sans-serif;font-weight:500;left:1156px;">止盈</div>
<div class="b" style="left:1182px;top:788px;width:39px;height:21px;background:#e5e5e5;border-radius:11px;"></div><div class="b" style="left:1180px;top:788px;width:21px;height:21px;background:#fff;border-radius:50%;box-shadow:0 1px 2px rgba(0,0,0,0.35);"></div>
<div class="b" style="left:1331px;top:780px;width:174px;height:37px;background:#fff;border:1px solid #c9cde6;box-sizing:border-box;"></div><div class="b" style="left:1332px;top:781px;width:35px;height:35px;background:#f5f6fa;"></div><div class="b" style="left:1469px;top:781px;width:35px;height:35px;background:#f5f6fa;"></div><div class="b" style="left:1343px;top:798px;width:12px;height:1px;background:#c4c6d0;height:1.4px;"></div><div class="b" style="left:1481px;top:798px;width:12px;height:1px;background:#c4c6d0;height:1.4px;"></div><div class="b" style="left:1486.3px;top:792.5px;width:1.4px;height:12px;background:#c4c6d0;"></div><div class="t" style="top:788.5px;font-size:15px;line-height:20px;color:#aeb2cc;font-family:'Liberation Sans',sans-serif;left:1397.5px;width:40px;text-align:center;font-weight:bold;">0</div>
<div class="t" style="top:844.0px;font-size:12px;line-height:20px;color:#222;font-family:'Liberation Sans','Noto Sans CJK TC',sans-serif;font-weight:500;left:1156px;">買入數量</div>
<div class="b" style="left:1331px;top:835px;width:174px;height:37px;background:#fff;border:1px solid #c9cde6;box-sizing:border-box;"></div><div class="b" style="left:1332px;top:836px;width:35px;height:35px;background:#f5f6fa;"></div><div class="b" style="left:1469px;top:836px;width:35px;height:35px;background:#f5f6fa;"></div><div class="b" style="left:1343px;top:853px;width:12px;height:1px;background:#c4c6d0;height:1.4px;"></div><div class="b" style="left:1481px;top:853px;width:12px;height:1px;background:#222;height:1.4px;"></div><div class="b" style="left:1486.3px;top:847.5px;width:1.4px;height:12px;background:#222;"></div><div class="t" style="top:843.5px;font-size:15px;line-height:20px;color:#111;font-family:'Liberation Sans',sans-serif;left:1397.5px;width:40px;text-align:center;">0</div>
<div class="b" style="left:1156px;top:892px;width:349px;height:1px;background:#f0f0f0;"></div>
<div class="b" style="left:1139px;top:900px;width:375px;height:1px;background:#d6d8e4;"></div>
<div class="b" style="left:1139px;top:901px;width:375px;height:76px;background:#ffffff;"></div>
<div class="b" style="left:1161.0px;top:915px;width:31px;height:31px;background:#cccccc;border-radius:9px;"></div><svg class="b" style="left:1161.5px;top:915.5px;" width="30" height="30" viewBox="0 0 30 30"><path d="M10.5 15V22M15 10V22M19.5 13V22" stroke="#f2f2f2" stroke-width="2" fill="none"/><path d="M7.5 22.5H22.5" stroke="#f2f2f2" stroke-width="1.3"/></svg>
<div class="b" style="left:1236.0px;top:915px;width:31px;height:31px;background:#cccccc;border-radius:9px;"></div><svg class="b" style="left:1236.5px;top:915.5px;" width="30" height="30" viewBox="0 0 30 30"><rect x="8.5" y="8.5" width="5.6" height="5.6" fill="#f3f3f3"/><rect x="15.9" y="8.5" width="5.6" height="5.6" fill="#f3f3f3"/><rect x="8.5" y="15.9" width="5.6" height="5.6" fill="#f3f3f3"/><rect x="15.9" y="15.9" width="5.6" height="5.6" fill="#f3f3f3"/></svg>
<div class="b" style="left:1386.0px;top:915px;width:31px;height:31px;background:#cccccc;border-radius:9px;"></div><svg class="b" style="left:1386.5px;top:915.5px;" width="30" height="30" viewBox="0 0 30 30"><path d="M13.2 9.5V15.5Q13.2 17.5 15 19L19.5 22.5" stroke="#f3f3f3" stroke-width="3" fill="none" stroke-linecap="round"/></svg>
<div class="b" style="left:1461.0px;top:915px;width:31px;height:31px;background:#cccccc;border-radius:9px;"></div><svg class="b" style="left:1461.5px;top:915.5px;" width="30" height="30" viewBox="0 0 30 30"><circle cx="15" cy="12.2" r="3.6" fill="none" stroke="#f3f3f3" stroke-width="2"/><path d="M8.8 22Q9.5 16.5 15 16.5Q20.5 16.5 21.2 22" fill="none" stroke="#f3f3f3" stroke-width="2"/></svg>
<div class="t" style="top:947.3px;font-size:12px;line-height:20px;color:#868686;font-family:'Liberation Sans','Noto Sans CJK TC',sans-serif;left:1146.5px;width:60px;text-align:center;">首頁</div>
<div class="t" style="top:947.3px;font-size:12px;line-height:20px;color:#868686;font-family:'Liberation Sans','Noto Sans CJK TC',sans-serif;left:1221.5px;width:60px;text-align:center;">訂單</div>
<div class="t" style="top:947.3px;font-size:12px;line-height:20px;color:#868686;font-family:'Liberation Sans','Noto Sans CJK TC',sans-serif;left:1371.5px;width:60px;text-align:center;">理財</div>
<div class="t" style="top:947.3px;font-size:12px;line-height:20px;color:#868686;font-family:'Liberation Sans','Noto Sans CJK TC',sans-serif;left:1446.5px;width:60px;text-align:center;">我的</div>
<div class="b" style="left:1300.5px;top:887.5px;width:51px;height:51px;background:#0565ff;border-radius:50%;"></div>
<svg class="b" style="left:1301px;top:888px;" width="50" height="50" viewBox="0 0 50 50"><path d="M14 22.2H36M14 22.2L22.5 16.5V22.2Z" stroke="#fff" stroke-width="2" fill="#fff" stroke-linejoin="round"/><path d="M14 27.8H36M36 27.8L27.5 33.5V27.8Z" stroke="#fff" stroke-width="2" fill="#fff" stroke-linejoin="round"/></svg>
<div class="b" style="left:1514px;top:161px;width:5px;height:821px;background:#272822;"></div>
<div class="b" style="left:1134px;top:977px;width:380px;height:5px;background:#272822;"></div>
</div></body></html>
